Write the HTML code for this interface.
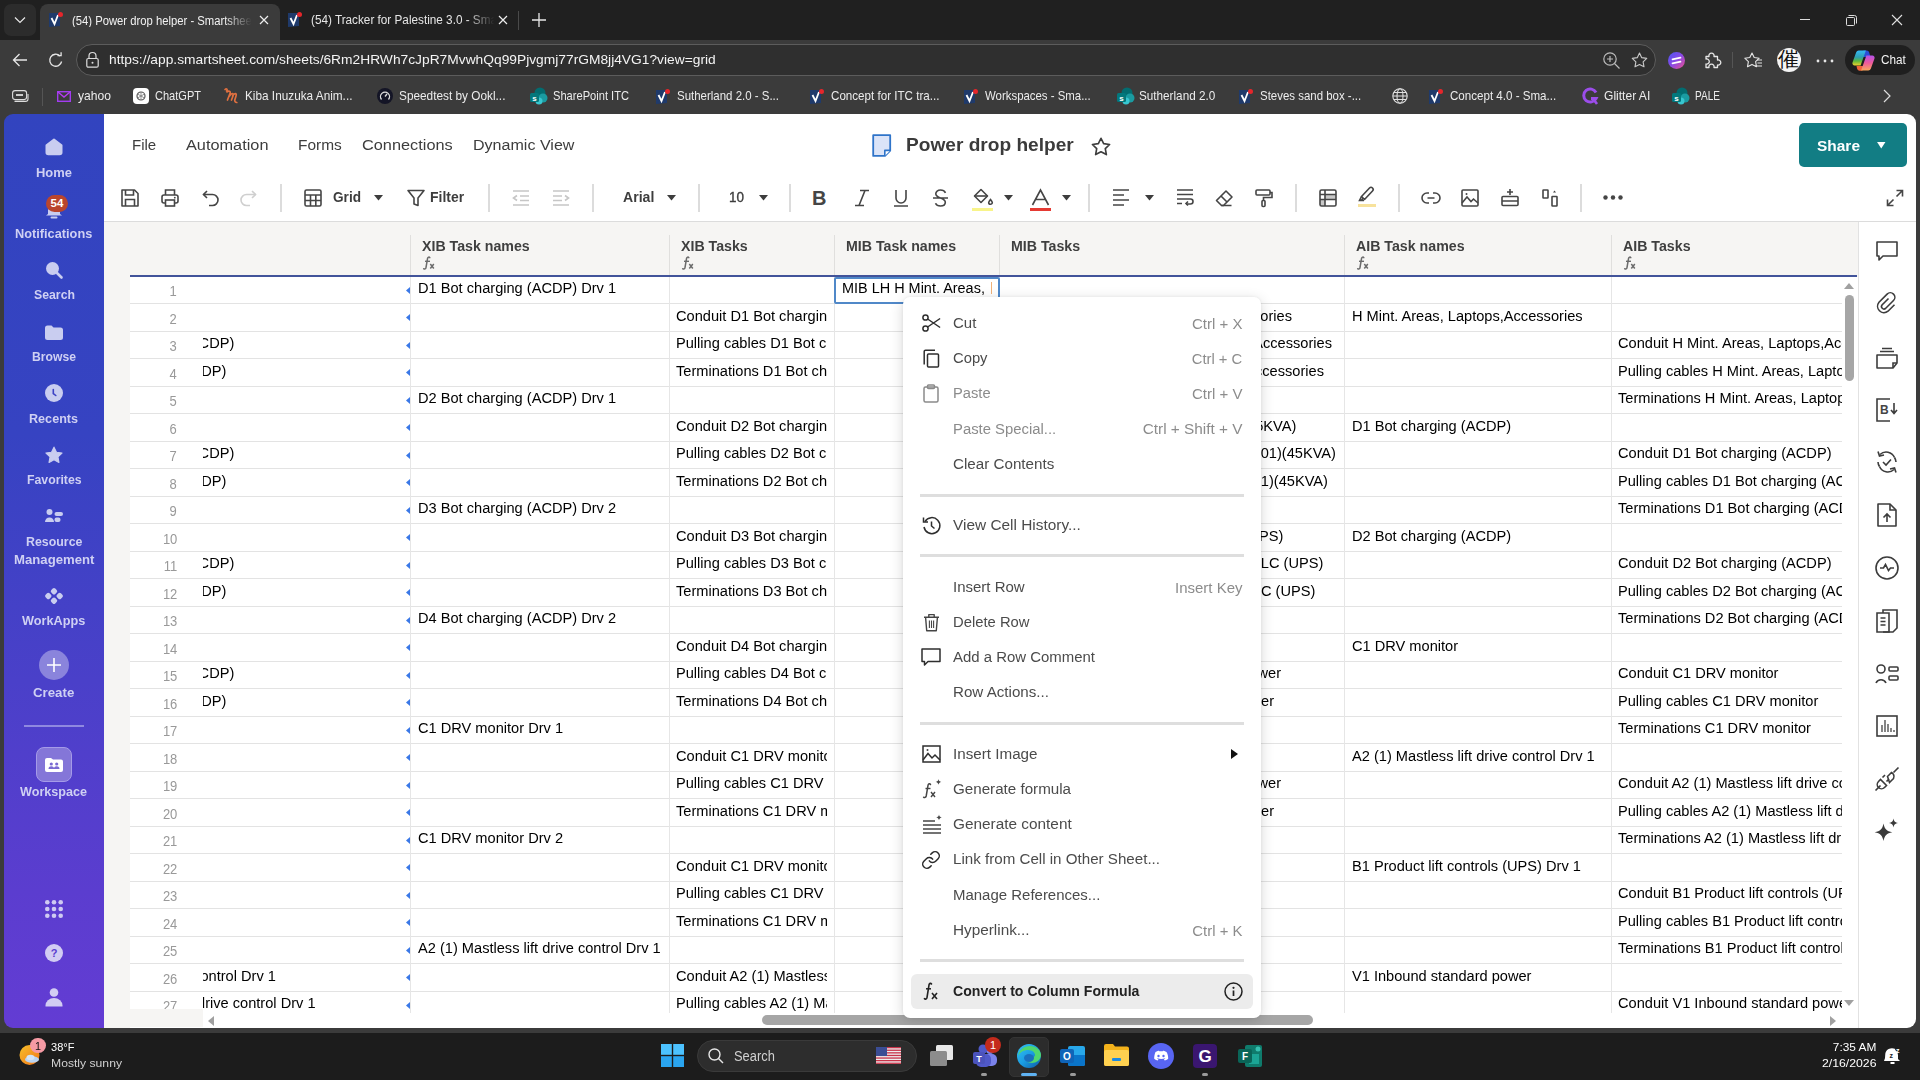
<!DOCTYPE html><html><head><meta charset="utf-8"><style>
*{margin:0;padding:0;box-sizing:border-box}
html,body{width:1920px;height:1080px;overflow:hidden;background:#202020;font-family:"Liberation Sans",sans-serif}
.a{position:absolute}
.t{position:absolute;white-space:nowrap;line-height:1}
svg{position:absolute;overflow:visible}
</style></head><body><div class="a" style="left:0;top:0;width:1920px;height:40px;background:#202020"></div><div class="a" style="left:4px;top:4px;width:32px;height:32px;background:#2c2c2c;border-radius:7px"></div><svg style="left:14px;top:16px" width="12" height="8" viewBox="0 0 12 8"><path d="M1 1.5l5 5 5-5" stroke="#e8e8e8" stroke-width="1.2" fill="none"/></svg><div class="a" style="left:40px;top:4px;width:240px;height:40px;background:#3b3b3b;border-radius:8px 8px 0 0"></div><svg style="left:49px;top:12px" width="14" height="15" viewBox="0 0 14 15"><path d="M0 1h11v13l-11 1z" fill="#1f3a6b"/><path d="M2.5 6l3 6 3.5-9" stroke="#fff" stroke-width="1.8" fill="none"/><circle cx="11.5" cy="2.5" r="2.5" fill="#e5262b"/></svg><div class="t" style="left:72px;top:14.59px;font-size:12.3px;font-weight:400;color:#f2f2f2;transform:scaleX(0.9164);transform-origin:0 0;width:196px;overflow:hidden;-webkit-mask-image:linear-gradient(90deg,#000 85%,transparent 100%)">(54) Power drop helper - Smartsheet</div><svg style="left:259px;top:15px" width="10" height="10" viewBox="0 0 10 10"><path d="M1 1l8 8M9 1l-8 8" stroke="#eee" stroke-width="1.2"/></svg><svg style="left:288px;top:12px" width="14" height="15" viewBox="0 0 14 15"><path d="M0 1h11v13l-11 1z" fill="#1f3a6b"/><path d="M2.5 6l3 6 3.5-9" stroke="#fff" stroke-width="1.8" fill="none"/><circle cx="11.5" cy="2.5" r="2.5" fill="#e5262b"/></svg><div class="t" style="left:311px;top:14.39px;font-size:12.3px;font-weight:400;color:#e6e6e6;transform:scaleX(0.9550);transform-origin:0 0;width:192px;overflow:hidden;-webkit-mask-image:linear-gradient(90deg,#000 85%,transparent 100%)">(54) Tracker for Palestine 3.0 - Smartsheet</div><svg style="left:498px;top:15px" width="10" height="10" viewBox="0 0 10 10"><path d="M1 1l8 8M9 1l-8 8" stroke="#eee" stroke-width="1.2"/></svg><div class="a" style="left:518px;top:11px;width:1px;height:19px;background:#4a4a4a"></div><svg style="left:532px;top:13px" width="14" height="14" viewBox="0 0 14 14"><path d="M7 0v14M0 7h14" stroke="#e8e8e8" stroke-width="1.3"/></svg><div class="a" style="left:1800px;top:19px;width:10px;height:1px;background:#ddd"></div><svg style="left:1846px;top:15px" width="11" height="11" viewBox="0 0 11 11"><rect x="0.5" y="2.5" width="8" height="8" rx="1" stroke="#ddd" fill="none"/><path d="M2.5 0.5h6a2 2 0 0 1 2 2v6" stroke="#ddd" fill="none"/></svg><svg style="left:1892px;top:15px" width="10" height="10" viewBox="0 0 10 10"><path d="M0 0l10 10M10 0l-10 10" stroke="#e0e0e0" stroke-width="1.1"/></svg><div class="a" style="left:0;top:40px;width:1920px;height:993px;background:#3b3b3b"></div><svg style="left:12px;top:53px" width="16" height="14" viewBox="0 0 16 14"><path d="M15 7H1.5M7.5 1L1.5 7l6 6" stroke="#e6e6e6" stroke-width="1.3" fill="none"/></svg><svg style="left:48px;top:52px" width="16" height="16" viewBox="0 0 16 16"><path d="M13.6 9.5A6 6 0 1 1 12 4" stroke="#e6e6e6" stroke-width="1.3" fill="none"/><path d="M9.5 3.6h3.6V0.2" stroke="#e6e6e6" stroke-width="1.3" fill="none"/></svg><div class="a" style="left:76px;top:44px;width:1580px;height:32px;background:#2f2f2f;border:1px solid #5c5c5c;border-radius:16px"></div><svg style="left:86px;top:52px" width="13" height="16" viewBox="0 0 13 16"><rect x="0.8" y="6.5" width="11.4" height="8.7" rx="1.5" stroke="#ddd" stroke-width="1.2" fill="none"/><path d="M3 6.5V4a3.5 3.5 0 0 1 7 0v2.5" stroke="#ddd" stroke-width="1.2" fill="none"/><circle cx="6.5" cy="10.8" r="1" fill="#ddd"/></svg><div class="t" style="left:108.7px;top:53.19px;font-size:13.6px;font-weight:400;color:#f4f4f4;transform:scaleX(1.0137);transform-origin:0 0;">https://app.smartsheet.com/sheets/6Rm2HRWh7cJpR7MvwhQq99Pjvgmj77rGM8jj4VG1?view=grid</div><svg style="left:1603px;top:52px" width="17" height="17" viewBox="0 0 17 17"><circle cx="7" cy="7" r="6.2" stroke="#bbb" stroke-width="1.2" fill="none"/><path d="M11.5 11.5l5 5M7 4v6M4 7h6" stroke="#bbb" stroke-width="1.2"/></svg><svg style="left:1631px;top:52px" width="17" height="16" viewBox="0 0 24 23"><path d="M12 1.5l3.2 6.6 7.2 1-5.2 5 1.3 7.2L12 17.9l-6.5 3.4 1.3-7.2-5.2-5 7.2-1z" stroke="#c8c8c8" stroke-width="1.6" fill="none" stroke-linejoin="round"/></svg><svg style="left:1668px;top:52px" width="17" height="17" viewBox="0 0 17 17"><defs><linearGradient id="gx" x1="0" y1="0" x2="1" y2="1"><stop offset="0" stop-color="#4a57f2"/><stop offset="0.5" stop-color="#8a48e6"/><stop offset="1" stop-color="#f0528a"/></linearGradient></defs><circle cx="8.5" cy="8.5" r="8.5" fill="url(#gx)"/><path d="M4.5 7.3l8-1.6M4.5 11.3l8-1.6" stroke="#fff" stroke-width="1.7" stroke-linecap="round"/></svg><svg style="left:1703px;top:51px" width="18" height="18" viewBox="0 0 18 18"><path d="M3 5.5h3a2.6 2.6 0 1 1 5 0h3.5V9a2.6 2.6 0 1 1 0 5v2.5H11a2.6 2.6 0 1 0-5 0H3V13a2.6 2.6 0 1 0 0-5z" stroke="#e6e6e6" stroke-width="1.3" fill="none" stroke-linejoin="round"/></svg><div class="a" style="left:1732px;top:52px;width:1px;height:16px;background:#555"></div><svg style="left:1744px;top:52px" width="19" height="16" viewBox="0 0 19 16"><path d="M8 1l2.2 4.5 5 .7-3.6 3.5.9 5L8 12.4l-4.5 2.3.9-5L.8 6.2l5-.7z" stroke="#e6e6e6" stroke-width="1.1" fill="none" stroke-linejoin="round"/><path d="M13 8h5M13.5 11h4.5M11 14h7" stroke="#e6e6e6" stroke-width="1.1"/></svg><div class="a" style="left:1777px;top:48px;width:24px;height:24px;border-radius:50%;background:#f4f4f4;overflow:hidden"><div class="t" style="left:1px;top:1px;font-size:21px;color:#111;font-family:'Liberation Serif'">催</div></div><svg style="left:1816px;top:59px" width="18" height="4" viewBox="0 0 18 4"><circle cx="2" cy="2" r="1.4" fill="#e6e6e6"/><circle cx="9" cy="2" r="1.4" fill="#e6e6e6"/><circle cx="16" cy="2" r="1.4" fill="#e6e6e6"/></svg><div class="a" style="left:1845px;top:45px;width:70px;height:30px;background:#1f1f1f;border-radius:15px"></div><svg style="left:1852px;top:49.5px" width="23" height="21" viewBox="0 0 23 21"><defs><linearGradient id="cpa" x1="0" y1="0" x2="0" y2="1"><stop offset="0" stop-color="#35b9f6"/><stop offset="0.45" stop-color="#2f9fb0"/><stop offset="0.7" stop-color="#5cb83c"/><stop offset="1" stop-color="#f3d02c"/></linearGradient><linearGradient id="cpb" x1="0" y1="0" x2="0" y2="1"><stop offset="0" stop-color="#b552ea"/><stop offset="0.5" stop-color="#ee5a9a"/><stop offset="1" stop-color="#f8a75c"/></linearGradient></defs><path d="M11.5 0.5h3.2a2.6 2.6 0 0 1 2.5 1.9L18.5 7H10z" fill="#2b4fd8"/><path d="M4.5 16h8l-1.2 3.2a2.6 2.6 0 0 1-2.4 1.6H7.6a2.6 2.6 0 0 1-2.4-1.7z" fill="#f0643a"/><path d="M6.7 0.5h7.2L8.6 15.5H2.6A2.2 2.2 0 0 1 .5 12.6L4.2 2.3A2.6 2.6 0 0 1 6.7.5z" fill="url(#cpa)"/><path d="M16.3 20.5H9.1l5.3-15h6A2.2 2.2 0 0 1 22.5 8.4l-3.7 10.3a2.6 2.6 0 0 1-2.5 1.8z" fill="url(#cpb)"/></svg><div class="t" style="left:1880.7px;top:53.59px;font-size:12.3px;font-weight:400;color:#f4f4f4;transform:scaleX(0.9545);transform-origin:0 0;">Chat</div><svg style="left:12px;top:90px" width="17" height="12" viewBox="0 0 17 12"><rect x="0.6" y="0.6" width="14" height="9" rx="2.5" stroke="#ddd" stroke-width="1.1" fill="none"/><path d="M4 5h7" stroke="#ddd" stroke-width="1.8"/><path d="M2.5 11.4h11a2.5 2.5 0 0 0 2.5-2.5V4" stroke="#ddd" stroke-width="1.1" fill="none"/></svg><div class="a" style="left:42px;top:88px;width:1px;height:18px;background:#555"></div><svg style="left:57px;top:91px" width="14" height="11" viewBox="0 0 14 11"><rect x="0.7" y="0.7" width="12.6" height="9.6" stroke="#a23cf0" stroke-width="1.4" fill="none"/><path d="M1 1l6 5 6-5" stroke="#b43cf0" stroke-width="1.4" fill="none"/></svg><div class="t" style="left:77.5px;top:89.83px;font-size:12.6px;font-weight:400;color:#ececec;transform:scaleX(0.9612);transform-origin:0 0;">yahoo</div><div class="a" style="left:133px;top:88px;width:16px;height:16px;background:#fff;border-radius:4px"></div><svg style="left:136px;top:91px" width="10" height="10" viewBox="0 0 10 10"><circle cx="5" cy="5" r="4" stroke="#555" stroke-width="1.2" fill="none"/><path d="M5 1v8M1.5 3l7 4M1.5 7l7-4" stroke="#777" stroke-width=".8"/></svg><div class="t" style="left:154.5px;top:89.83px;font-size:12.6px;font-weight:400;color:#ececec;transform:scaleX(0.8759);transform-origin:0 0;">ChatGPT</div><svg style="left:222px;top:87px" width="18" height="18" viewBox="0 0 18 18"><path d="M3 2.5c1.5-1.5 3 0 1.5 1.5M5 5c1.5-1.5 4-1 3 1.5L5.5 13M7.5 9c2-3.5 4.5-3 3.5 0l-1.5 4M10.5 9c2-3.5 4.5-3 3.5 0l-1.2 4c-.3 1.2.6 2.5 2 2.5" stroke="#e07040" stroke-width="1.7" fill="none" stroke-linecap="round"/></svg><div class="t" style="left:245px;top:89.83px;font-size:12.6px;font-weight:400;color:#ececec;transform:scaleX(0.9359);transform-origin:0 0;">Kiba Inuzuka Anim...</div><svg style="left:377px;top:88px" width="16" height="16" viewBox="0 0 16 16"><circle cx="8" cy="8" r="8" fill="#141526"/><path d="M4.5 11.5a4.5 4.5 0 1 1 7 0" stroke="#ddd" stroke-width="1.3" fill="none"/><path d="M8 8.5l2-2.5" stroke="#ddd" stroke-width="1.3"/></svg><div class="t" style="left:398.75px;top:89.83px;font-size:12.6px;font-weight:400;color:#ececec;transform:scaleX(0.9386);transform-origin:0 0;">Speedtest by Ookl...</div><svg style="left:530px;top:87px" width="18" height="18" viewBox="0 0 18 18"><circle cx="10" cy="6" r="5.5" fill="#036c70"/><circle cx="13" cy="11" r="4.5" fill="#1a9ba1"/><circle cx="9" cy="14" r="3.5" fill="#37c6d0"/><rect x="0" y="6" width="9" height="9" rx="1.5" fill="#03787c"/><text x="4.5" y="13.5" font-size="8" font-weight="700" fill="#fff" text-anchor="middle" font-family="Liberation Sans">s</text></svg><div class="t" style="left:553px;top:89.83px;font-size:12.6px;font-weight:400;color:#ececec;transform:scaleX(0.8823);transform-origin:0 0;">SharePoint ITC</div><svg style="left:656px;top:89px" width="14" height="15" viewBox="0 0 14 15"><path d="M0 1h11v13l-11 1z" fill="#1f3a6b"/><path d="M2.5 6l3 6 3.5-9" stroke="#fff" stroke-width="1.8" fill="none"/><circle cx="11.5" cy="2.5" r="2.5" fill="#e5262b"/></svg><div class="t" style="left:677px;top:89.83px;font-size:12.6px;font-weight:400;color:#ececec;transform:scaleX(0.9102);transform-origin:0 0;">Sutherland 2.0 - S...</div><svg style="left:810px;top:89px" width="14" height="15" viewBox="0 0 14 15"><path d="M0 1h11v13l-11 1z" fill="#1f3a6b"/><path d="M2.5 6l3 6 3.5-9" stroke="#fff" stroke-width="1.8" fill="none"/><circle cx="11.5" cy="2.5" r="2.5" fill="#e5262b"/></svg><div class="t" style="left:830.75px;top:89.83px;font-size:12.6px;font-weight:400;color:#ececec;transform:scaleX(0.9223);transform-origin:0 0;">Concept for ITC tra...</div><svg style="left:964px;top:89px" width="14" height="15" viewBox="0 0 14 15"><path d="M0 1h11v13l-11 1z" fill="#1f3a6b"/><path d="M2.5 6l3 6 3.5-9" stroke="#fff" stroke-width="1.8" fill="none"/><circle cx="11.5" cy="2.5" r="2.5" fill="#e5262b"/></svg><div class="t" style="left:985px;top:89.83px;font-size:12.6px;font-weight:400;color:#ececec;transform:scaleX(0.9062);transform-origin:0 0;">Workspaces - Sma...</div><svg style="left:1117px;top:87px" width="18" height="18" viewBox="0 0 18 18"><circle cx="10" cy="6" r="5.5" fill="#036c70"/><circle cx="13" cy="11" r="4.5" fill="#1a9ba1"/><circle cx="9" cy="14" r="3.5" fill="#37c6d0"/><rect x="0" y="6" width="9" height="9" rx="1.5" fill="#03787c"/><text x="4.5" y="13.5" font-size="8" font-weight="700" fill="#fff" text-anchor="middle" font-family="Liberation Sans">s</text></svg><div class="t" style="left:1138.75px;top:89.83px;font-size:12.6px;font-weight:400;color:#ececec;transform:scaleX(0.9303);transform-origin:0 0;">Sutherland 2.0</div><svg style="left:1239px;top:89px" width="14" height="15" viewBox="0 0 14 15"><path d="M0 1h11v13l-11 1z" fill="#1f3a6b"/><path d="M2.5 6l3 6 3.5-9" stroke="#fff" stroke-width="1.8" fill="none"/><circle cx="11.5" cy="2.5" r="2.5" fill="#e5262b"/></svg><div class="t" style="left:1260px;top:89.83px;font-size:12.6px;font-weight:400;color:#ececec;transform:scaleX(0.9092);transform-origin:0 0;">Steves sand box -...</div><svg style="left:1392px;top:88px" width="16" height="16" viewBox="0 0 16 16"><circle cx="8" cy="8" r="7.2" stroke="#e0e0e0" stroke-width="1.1" fill="none"/><ellipse cx="8" cy="8" rx="3" ry="7.2" stroke="#e0e0e0" stroke-width="1.1" fill="none"/><path d="M1 8h14M2 4.5h12M2 11.5h12" stroke="#e0e0e0" stroke-width="1"/></svg><svg style="left:1429px;top:89px" width="14" height="15" viewBox="0 0 14 15"><path d="M0 1h11v13l-11 1z" fill="#1f3a6b"/><path d="M2.5 6l3 6 3.5-9" stroke="#fff" stroke-width="1.8" fill="none"/><circle cx="11.5" cy="2.5" r="2.5" fill="#e5262b"/></svg><div class="t" style="left:1450px;top:89.83px;font-size:12.6px;font-weight:400;color:#ececec;transform:scaleX(0.9195);transform-origin:0 0;">Concept 4.0 - Sma...</div><svg style="left:1582px;top:87px" width="17" height="18" viewBox="0 0 17 18"><path d="M14 5.5A6.5 6.5 0 1 0 14 11.5H9" stroke="#9b4dea" stroke-width="3" fill="none"/><path d="M12 13l3 4" stroke="#9b4dea" stroke-width="2.6"/></svg><div class="t" style="left:1603.75px;top:89.83px;font-size:12.6px;font-weight:400;color:#ececec;transform:scaleX(0.9573);transform-origin:0 0;">Glitter AI</div><svg style="left:1672px;top:87px" width="18" height="18" viewBox="0 0 18 18"><circle cx="10" cy="6" r="5.5" fill="#036c70"/><circle cx="13" cy="11" r="4.5" fill="#1a9ba1"/><circle cx="9" cy="14" r="3.5" fill="#37c6d0"/><rect x="0" y="6" width="9" height="9" rx="1.5" fill="#03787c"/><text x="4.5" y="13.5" font-size="8" font-weight="700" fill="#fff" text-anchor="middle" font-family="Liberation Sans">s</text></svg><div class="t" style="left:1695px;top:89.83px;font-size:12.6px;font-weight:400;color:#ececec;transform:scaleX(0.7991);transform-origin:0 0;">PALE</div><svg style="left:1883px;top:89px" width="8" height="14" viewBox="0 0 8 14"><path d="M1 1l6 6-6 6" stroke="#ddd" stroke-width="1.2" fill="none"/></svg><div class="a" style="left:4px;top:114px;width:100px;height:914px;border-radius:9px 0 0 9px;background:linear-gradient(180deg,#3244bf 0%,#3643c2 35%,#4a40c9 62%,#5b3dcf 85%,#633cd3 100%)"></div><svg style="left:45px;top:138px" width="18" height="17" viewBox="0 0 18 17"><path d="M9 1.5L16.5 7.3v7.2a1.8 1.8 0 0 1-1.8 1.8H3.3a1.8 1.8 0 0 1-1.8-1.8V7.3z" fill="#c9cdf0" stroke="#c9cdf0" stroke-width="2" stroke-linejoin="round"/></svg><div class="t" style="left:36.0px;top:166.57px;font-size:12.2px;font-weight:700;color:#cfd0f3;transform:scaleX(1.0621);transform-origin:0 0;">Home</div><svg style="left:45px;top:203px" width="18" height="16" viewBox="0 0 18 16"><path d="M3 11V7a6 6 0 0 1 12 0v4l2 1.5H1z" fill="#c9cdf0"/><path d="M6.5 14.5h5" stroke="#c9cdf0" stroke-width="2" stroke-linecap="round"/></svg><div class="a" style="left:46px;top:195px;width:22px;height:17px;border-radius:9px;background:#b9452e"></div><div class="t" style="left:46px;width:22px;text-align:center;top:198px;font-size:11.5px;font-weight:700;color:#fff">54</div><div class="t" style="left:15.299999999999997px;top:227.67px;font-size:12.2px;font-weight:700;color:#cfd0f3;transform:scaleX(1.0476);transform-origin:0 0;">Notifications</div><svg style="left:45px;top:261px" width="18" height="18" viewBox="0 0 18 18"><circle cx="7.5" cy="7.5" r="6.5" fill="#c9cdf0"/><path d="M12 12l4.5 4.5" stroke="#c9cdf0" stroke-width="2.6" stroke-linecap="round"/></svg><div class="t" style="left:33.5px;top:289.27px;font-size:12.2px;font-weight:700;color:#cfd0f3;transform:scaleX(1.0075);transform-origin:0 0;">Search</div><svg style="left:45px;top:325px" width="18" height="15" viewBox="0 0 18 15"><path d="M0 3a2.5 2.5 0 0 1 2.5-2.5h4l2 2h7A2.5 2.5 0 0 1 18 5v7.5A2.5 2.5 0 0 1 15.5 15h-13A2.5 2.5 0 0 1 0 12.5z" fill="#c9cdf0"/></svg><div class="t" style="left:32.0px;top:350.67px;font-size:12.2px;font-weight:700;color:#cfd0f3;transform:scaleX(0.9984);transform-origin:0 0;">Browse</div><svg style="left:45px;top:384px" width="18" height="18" viewBox="0 0 18 18"><circle cx="9" cy="9" r="9" fill="#c9cdf0"/><path d="M8.3 5.5v4l2.5 2" stroke="#3d42c4" stroke-width="1.6" fill="none" stroke-linecap="round"/></svg><div class="t" style="left:29.45px;top:412.67px;font-size:12.2px;font-weight:700;color:#cfd0f3;transform:scaleX(1.0344);transform-origin:0 0;">Recents</div><svg style="left:45px;top:446px" width="18" height="18" viewBox="0 0 24 23"><path d="M12 1l3.3 6.8 7.4 1-5.4 5.2 1.3 7.4L12 17.9l-6.6 3.5 1.3-7.4L1.3 8.8l7.4-1z" fill="#c9cdf0" stroke="#c9cdf0" stroke-width="1.5" stroke-linejoin="round"/></svg><div class="t" style="left:26.7px;top:473.67px;font-size:12.2px;font-weight:700;color:#cfd0f3;transform:scaleX(1.0065);transform-origin:0 0;">Favorites</div><svg style="left:45px;top:509px" width="18" height="14" viewBox="0 0 18 14"><circle cx="4.5" cy="3" r="3" fill="#c9cdf0"/><path d="M0 13a4.5 4.5 0 0 1 9 0z" fill="#c9cdf0"/><rect x="9.5" y="3" width="8.5" height="4" rx="2" fill="#c9cdf0"/><rect x="9.5" y="8.5" width="6" height="4.5" rx="2" fill="#c9cdf0"/></svg><div class="t" style="left:25.75px;top:535.67px;font-size:12.2px;font-weight:700;color:#cfd0f3;transform:scaleX(1.0161);transform-origin:0 0;">Resource</div><div class="t" style="left:13.75px;top:553.67px;font-size:12.2px;font-weight:700;color:#cfd0f3;transform:scaleX(1.0795);transform-origin:0 0;">Management</div><svg style="left:45px;top:588px" width="18" height="16" viewBox="0 0 18 16"><g fill="#c9cdf0"><rect x="-2.8" y="-2.8" width="5.6" height="5.6" rx="1.8" transform="translate(9 3.3) rotate(45)"/><rect x="-2.8" y="-2.8" width="5.6" height="5.6" rx="1.8" transform="translate(3.3 8) rotate(45)"/><rect x="-2.8" y="-2.8" width="5.6" height="5.6" rx="1.8" transform="translate(14.7 8) rotate(45)"/><rect x="-2.8" y="-2.8" width="5.6" height="5.6" rx="1.8" transform="translate(9 12.7) rotate(45)"/></g></svg><div class="t" style="left:22.3px;top:614.67px;font-size:12.2px;font-weight:700;color:#cfd0f3;transform:scaleX(1.0431);transform-origin:0 0;">WorkApps</div><div class="a" style="left:39px;top:650px;width:30px;height:30px;border-radius:50%;background:#8a84dc"></div><svg style="left:46px;top:657px" width="16" height="16" viewBox="0 0 16 16"><path d="M8 1v14M1 8h14" stroke="#fff" stroke-width="1.6"/></svg><div class="t" style="left:33.35px;top:686.67px;font-size:12.2px;font-weight:700;color:#cfd0f3;transform:scaleX(1.0875);transform-origin:0 0;">Create</div><div class="a" style="left:24px;top:725px;width:60px;height:2px;background:#8f89e0"></div><div class="a" style="left:36px;top:747px;width:36px;height:35px;border-radius:8px;background:#8476d8;border:1.5px solid #a59be8"></div><svg style="left:45px;top:758px" width="18" height="14" viewBox="0 0 18 14"><path d="M0 2a2 2 0 0 1 2-2h4l2 1.5h8a2 2 0 0 1 2 2V12a2 2 0 0 1-2 2H2a2 2 0 0 1-2-2z" fill="#fff"/><circle cx="6.3" cy="6" r="1.6" fill="#7a6ad2"/><circle cx="11.7" cy="6" r="1.6" fill="#7a6ad2"/><path d="M3.5 11a2.8 2.8 0 0 1 5.6 0zM8.9 11a2.8 2.8 0 0 1 5.6 0z" fill="#7a6ad2"/></svg><div class="t" style="left:20.4px;top:786.37px;font-size:12.2px;font-weight:700;color:#cfd0f3;transform:scaleX(1.0359);transform-origin:0 0;">Workspace</div><svg style="left:45px;top:900px" width="18" height="18" viewBox="0 0 18 18"><circle cx="2.3" cy="2.3" r="2.3" fill="#cfcaf2"/><circle cx="2.3" cy="9.0" r="2.3" fill="#cfcaf2"/><circle cx="2.3" cy="15.7" r="2.3" fill="#cfcaf2"/><circle cx="9.0" cy="2.3" r="2.3" fill="#cfcaf2"/><circle cx="9.0" cy="9.0" r="2.3" fill="#cfcaf2"/><circle cx="9.0" cy="15.7" r="2.3" fill="#cfcaf2"/><circle cx="15.7" cy="2.3" r="2.3" fill="#cfcaf2"/><circle cx="15.7" cy="9.0" r="2.3" fill="#cfcaf2"/><circle cx="15.7" cy="15.7" r="2.3" fill="#cfcaf2"/></svg><svg style="left:45px;top:944px" width="18" height="18" viewBox="0 0 18 18"><circle cx="9" cy="9" r="9" fill="#d2ccf3"/><text x="9" y="12.8" text-anchor="middle" font-size="11" font-weight="700" fill="#5a3ecf" font-family="Liberation Sans">?</text></svg><svg style="left:45px;top:988px" width="18" height="19" viewBox="0 0 18 19"><circle cx="9" cy="4.5" r="4.3" fill="#d2ccf3"/><path d="M0.5 17.5a8.5 7.5 0 0 1 17 0v1H0.5z" fill="#d2ccf3"/></svg><div class="a" style="left:104px;top:114px;width:1812px;height:914px;background:#fff;border-radius:0 9px 9px 0;overflow:hidden"></div><div class="t" style="left:132px;top:136.96px;font-size:15.4px;font-weight:400;color:#3d3d3d;transform:scaleX(0.9772);transform-origin:0 0;">File</div><div class="t" style="left:185.75px;top:136.96px;font-size:15.4px;font-weight:400;color:#3d3d3d;transform:scaleX(1.0590);transform-origin:0 0;">Automation</div><div class="t" style="left:297.5px;top:136.96px;font-size:15.4px;font-weight:400;color:#3d3d3d;transform:scaleX(1.0027);transform-origin:0 0;">Forms</div><div class="t" style="left:361.75px;top:136.96px;font-size:15.4px;font-weight:400;color:#3d3d3d;transform:scaleX(1.0600);transform-origin:0 0;">Connections</div><div class="t" style="left:473px;top:136.96px;font-size:15.4px;font-weight:400;color:#3d3d3d;transform:scaleX(1.0433);transform-origin:0 0;">Dynamic View</div><svg style="left:872px;top:134px" width="20" height="23" viewBox="0 0 20 23"><path d="M1.2 1.2h17v15.5l-5.2 5.2H1.2z" fill="#dbe4f8" stroke="#2f74c9" stroke-width="1.8" stroke-linejoin="round"/><path d="M18.2 16.4h-5.4v5.5" fill="#fff" stroke="#2f74c9" stroke-width="1.6" stroke-linejoin="round"/></svg><div class="t" style="left:905.8px;top:136.09px;font-size:18.8px;font-weight:700;color:#3b3b3b;transform:scaleX(1.0173);transform-origin:0 0;">Power drop helper</div><svg style="left:1091px;top:137px" width="20" height="19" viewBox="0 0 24 23"><path d="M12 1.5l3.2 6.6 7.2 1-5.2 5 1.3 7.2L12 17.9l-6.5 3.4 1.3-7.2-5.2-5 7.2-1z" stroke="#3d3d3d" stroke-width="2" fill="none" stroke-linejoin="round"/></svg><div class="a" style="left:1799px;top:123px;width:108px;height:44px;background:#127d84;border-radius:5px"></div><div class="t" style="left:1816.6px;top:137.50px;font-size:15px;font-weight:700;color:#fff;transform:scaleX(1.0314);transform-origin:0 0;">Share</div><svg style="left:1877px;top:142px" width="8.5" height="6.5" viewBox="0 0 9 7"><path d="M0 0h9L4.5 7z" fill="#fff"/></svg><svg style="left:121px;top:189px" width="18" height="18" viewBox="0 0 18 18"><path d="M1 1h12.5L17 4.5V17H1z" stroke="#454545" stroke-width="1.6" fill="none" stroke-linejoin="round"/><path d="M4.5 1v5h8V1M4.5 17v-6.5h9V17" stroke="#454545" stroke-width="1.6" fill="none"/></svg><svg style="left:161px;top:189px" width="18" height="18" viewBox="0 0 18 18"><path d="M4.5 6V1h9v5" stroke="#454545" stroke-width="1.6" fill="none"/><rect x="1" y="6" width="16" height="8" rx="2" stroke="#454545" stroke-width="1.6" fill="none"/><rect x="4.5" y="11" width="9" height="6" fill="#fff" stroke="#454545" stroke-width="1.6"/><circle cx="13.8" cy="8.7" r="0.9" fill="#454545"/></svg><svg style="left:202px;top:189px" width="17" height="18" viewBox="0 0 17 18"><path d="M1.5 5.5h9a5.5 5.5 0 0 1 0 11H7" stroke="#454545" stroke-width="1.6" fill="none"/><path d="M5 2L1.5 5.5 5 9" stroke="#454545" stroke-width="1.6" fill="none"/></svg><svg style="left:240px;top:189px" width="17" height="18" viewBox="0 0 17 18"><path d="M15.5 5.5h-9a5.5 5.5 0 0 0 0 11H10" stroke="#cfcfcf" stroke-width="1.6" fill="none"/><path d="M12 2l3.5 3.5L12 9" stroke="#cfcfcf" stroke-width="1.6" fill="none"/></svg><div class="a" style="left:280px;top:184px;width:2px;height:28px;background:#dcdcdc"></div><svg style="left:304px;top:189px" width="18" height="18" viewBox="0 0 18 18"><rect x="1" y="1" width="16" height="16" rx="1.5" stroke="#454545" stroke-width="1.6" fill="none"/><path d="M1 6h16M1 11.5h16M6.5 6v11M11.8 6v11" stroke="#454545" stroke-width="1.6" fill="none"/></svg><div class="t" style="left:333.3px;top:191.02px;font-size:13.8px;font-weight:700;color:#3d3d3d;transform:scaleX(0.9870);transform-origin:0 0;">Grid</div><svg style="left:374px;top:194.5px" width="9" height="6" viewBox="0 0 9 6"><path d="M0 0h9L4.5 5.5z" fill="#3d3d3d"/></svg><svg style="left:407px;top:189px" width="18" height="18" viewBox="0 0 18 18"><path d="M1 1.5h16L11 9v7.5l-4-1.5V9z" stroke="#454545" stroke-width="1.6" fill="none" stroke-linejoin="round"/></svg><div class="t" style="left:429.6px;top:191.02px;font-size:13.8px;font-weight:700;color:#3d3d3d;transform:scaleX(1.0107);transform-origin:0 0;">Filter</div><div class="a" style="left:488px;top:184px;width:2px;height:28px;background:#dcdcdc"></div><svg style="left:512px;top:190px" width="18" height="16" viewBox="0 0 18 16"><path d="M1 1h16M8 6h9M8 10.5h9M1 15h16M5 5.5L1.5 8 5 10.5" stroke="#c6c6c6" stroke-width="1.6" fill="none"/></svg><svg style="left:552px;top:190px" width="18" height="16" viewBox="0 0 18 16"><path d="M1 1h16M1 6h9M1 10.5h9M1 15h16M13 5.5L16.5 8 13 10.5" stroke="#c6c6c6" stroke-width="1.6" fill="none"/></svg><div class="a" style="left:592px;top:184px;width:2px;height:28px;background:#dcdcdc"></div><div class="t" style="left:622.7px;top:191.02px;font-size:13.8px;font-weight:700;color:#3d3d3d;transform:scaleX(1.0202);transform-origin:0 0;">Arial</div><svg style="left:667px;top:194.5px" width="9" height="6" viewBox="0 0 9 6"><path d="M0 0h9L4.5 5.5z" fill="#3d3d3d"/></svg><div class="a" style="left:698px;top:184px;width:2px;height:28px;background:#dcdcdc"></div><div class="t" style="left:729px;top:191.02px;font-size:13.8px;font-weight:400;color:#3d3d3d;transform:scaleX(0.9772);transform-origin:0 0;-webkit-text-stroke:0.35px #3d3d3d">10</div><svg style="left:759px;top:194.5px" width="9" height="6" viewBox="0 0 9 6"><path d="M0 0h9L4.5 5.5z" fill="#3d3d3d"/></svg><div class="a" style="left:789px;top:184px;width:2px;height:28px;background:#dcdcdc"></div><div class="t" style="left:812px;top:188px;font-size:20px;font-weight:700;color:#454545">B</div><svg style="left:853px;top:189px" width="18" height="18" viewBox="0 0 18 18"><path d="M7 1.5h9M2 16.5h9M12 1.5L6 16.5" stroke="#454545" stroke-width="1.6" fill="none"/></svg><svg style="left:893px;top:189px" width="16" height="18" viewBox="0 0 16 18"><path d="M3 1v8a5 5 0 0 0 10 0V1M1 17h14" stroke="#454545" stroke-width="1.6" fill="none"/></svg><svg style="left:932px;top:189px" width="17" height="18" viewBox="0 0 17 18"><path d="M13.5 3.8C12.6 2 11 1 8.5 1 5.8 1 3.8 2.5 3.8 4.8c0 2.2 2 3.2 4.7 4.2M1 9h15M8.5 9c2.8 1 4.8 2 4.8 4.2 0 2.3-2 3.8-4.8 3.8-2.5 0-4.2-1-5-2.8" stroke="#454545" stroke-width="1.6" fill="none"/></svg><svg style="left:972px;top:188px" width="22" height="17" viewBox="0 0 22 17"><path d="M9 1.5L15.5 8 9 14.5 2.5 8z" stroke="#454545" stroke-width="1.6" fill="none" stroke-linejoin="round"/><path d="M2.5 8h13" stroke="#454545" stroke-width="1.6" fill="none"/><path d="M18.5 11.5c1.2 1.5 1.8 2.3 1.8 3a1.8 1.8 0 0 1-3.6 0c0-.7.6-1.5 1.8-3z" stroke="#454545" stroke-width="1.6" fill="none"/></svg><div class="a" style="left:972px;top:208px;width:21px;height:3px;background:#f8f48a"></div><svg style="left:1004px;top:194.5px" width="9" height="6" viewBox="0 0 9 6"><path d="M0 0h9L4.5 5.5z" fill="#3d3d3d"/></svg><svg style="left:1031px;top:189px" width="19" height="16" viewBox="0 0 19 16"><path d="M1.5 16L9.5 1l8 15M4.5 10.5h10" stroke="#454545" stroke-width="1.6" fill="none"/></svg><div class="a" style="left:1030px;top:208px;width:21px;height:3px;background:#e53a33"></div><svg style="left:1062px;top:194.5px" width="9" height="6" viewBox="0 0 9 6"><path d="M0 0h9L4.5 5.5z" fill="#3d3d3d"/></svg><div class="a" style="left:1088px;top:184px;width:2px;height:28px;background:#dcdcdc"></div><svg style="left:1112px;top:189px" width="18" height="17" viewBox="0 0 18 17"><path d="M1 1h16M1 6h11M1 11h16M1 16h11" stroke="#454545" stroke-width="1.6" fill="none"/></svg><svg style="left:1145px;top:194.5px" width="9" height="6" viewBox="0 0 9 6"><path d="M0 0h9L4.5 5.5z" fill="#3d3d3d"/></svg><svg style="left:1176px;top:189px" width="18" height="18" viewBox="0 0 18 18"><path d="M1 1h16M1 5.5h16M1 10h13.5a2.5 2.5 0 0 1 0 5H10M1 14.5h5" stroke="#454545" stroke-width="1.6" fill="none"/><path d="M12 12.5l-2 2 2 2" stroke="#454545" stroke-width="1.6" fill="none"/></svg><svg style="left:1215px;top:189px" width="18" height="18" viewBox="0 0 18 18"><path d="M1.5 11.5L11 2l6 6-8.5 8.5H6.5z" stroke="#454545" stroke-width="1.6" fill="none" stroke-linejoin="round"/><path d="M6 7l6 6M6.5 16.5h10" stroke="#454545" stroke-width="1.6" fill="none"/></svg><svg style="left:1255px;top:189px" width="18" height="18" viewBox="0 0 18 18"><rect x="1" y="1" width="14" height="5" rx="1" stroke="#454545" stroke-width="1.6" fill="none"/><path d="M15 3.5h2v5H8.5v3" stroke="#454545" stroke-width="1.6" fill="none"/><rect x="7" y="11.5" width="3" height="6" rx="1" stroke="#454545" stroke-width="1.6" fill="none"/></svg><div class="a" style="left:1295px;top:184px;width:2px;height:28px;background:#dcdcdc"></div><svg style="left:1319px;top:189px" width="18" height="18" viewBox="0 0 18 18"><rect x="6" y="5.5" width="11" height="5" fill="#c8c8c8"/><rect x="1" y="10.5" width="5" height="6" fill="#c8c8c8"/><rect x="1" y="1" width="16" height="16" rx="1.5" stroke="#454545" stroke-width="1.6" fill="none"/><path d="M1 5.5h16M1 10.5h16M6 1v16" stroke="#454545" stroke-width="1.6" fill="none"/></svg><svg style="left:1358px;top:187px" width="18" height="18" viewBox="0 0 18 18"><path d="M6.5 12.5l8-8.5a2 2 0 0 0-3-3l-8 8.5z" stroke="#454545" stroke-width="1.6" fill="none" stroke-linejoin="round"/><path d="M3.5 9.5l-2 4h4.5M5.5 11L3 13.5" stroke="#454545" stroke-width="1.6" fill="none"/></svg><div class="a" style="left:1358px;top:204px;width:18px;height:3px;background:#f7e29c"></div><div class="a" style="left:1398px;top:184px;width:2px;height:28px;background:#dcdcdc"></div><svg style="left:1422px;top:191px" width="18" height="14" viewBox="0 0 18 14"><path d="M7 2H5a5 5 0 0 0 0 10h2M11 2h2a5 5 0 0 1 0 10h-2M5.5 7h7" stroke="#454545" stroke-width="1.6" fill="none"/></svg><svg style="left:1461px;top:189px" width="18" height="18" viewBox="0 0 18 18"><rect x="1" y="1" width="16" height="16" rx="1" stroke="#454545" stroke-width="1.6" fill="none"/><path d="M1 14l5-6 4 4.5 2.5-2.5L17 14" stroke="#454545" stroke-width="1.6" fill="none"/><circle cx="5.5" cy="5" r="1" fill="#454545"/></svg><svg style="left:1501px;top:188px" width="18" height="19" viewBox="0 0 18 19"><rect x="1" y="8.5" width="16" height="9" rx="1" stroke="#454545" stroke-width="1.6" fill="none"/><path d="M1 13h16M9 1v6M6 4h6" stroke="#454545" stroke-width="1.6" fill="none"/></svg><svg style="left:1542px;top:189px" width="16" height="18" viewBox="0 0 16 18"><rect x="1" y="1" width="5" height="8" rx="0.5" stroke="#454545" stroke-width="1.6" fill="none"/><rect x="10" y="7.5" width="5" height="9.5" rx="0.5" stroke="#454545" stroke-width="1.6" fill="none"/><path d="M11 3.5l1.5-2 1.5 2" fill="#454545"/></svg><div class="a" style="left:1580px;top:184px;width:2px;height:28px;background:#dcdcdc"></div><svg style="left:1603px;top:195px" width="20" height="5" viewBox="0 0 20 5"><circle cx="2.5" cy="2.5" r="2.2" fill="#454545"/><circle cx="10" cy="2.5" r="2.2" fill="#454545"/><circle cx="17.5" cy="2.5" r="2.2" fill="#454545"/></svg><svg style="left:1886px;top:189px" width="18" height="18" viewBox="0 0 18 18"><path d="M10.5 1.5h6v6M16.5 1.5l-6 6M7.5 16.5h-6v-6M1.5 16.5l6-6" stroke="#454545" stroke-width="1.6" fill="none"/></svg><div class="a" style="left:104px;top:221px;width:1812px;height:1px;background:#dcdcdc"></div><div class="a" style="left:104px;top:222px;width:1754px;height:806px;background:#f6f5f3"></div><div class="a" style="left:410px;top:235px;width:1px;height:40px;background:#e0dfdd"></div><div class="a" style="left:669px;top:235px;width:1px;height:40px;background:#e0dfdd"></div><div class="a" style="left:834px;top:235px;width:1px;height:40px;background:#e0dfdd"></div><div class="a" style="left:999px;top:235px;width:1px;height:40px;background:#e0dfdd"></div><div class="a" style="left:1344px;top:235px;width:1px;height:40px;background:#e0dfdd"></div><div class="a" style="left:1611px;top:235px;width:1px;height:40px;background:#e0dfdd"></div><div class="t" style="left:421.8px;top:238.93px;font-size:14.5px;font-weight:700;color:#3f3f3f;transform:scaleX(0.9781);transform-origin:0 0;">XIB Task names</div><svg style="left:423px;top:256px" width="12" height="14" viewBox="0 0 12 14"><path d="M6.8 1.6C6.2 0.8 5 1 4.6 2.2L3 11.5c-.3 1.4-1.5 2-2.3 1.3" stroke="#6b6b6b" stroke-width="1.5" fill="none" stroke-linecap="round"/><path d="M2 5.3h5" stroke="#6b6b6b" stroke-width="1.4"/><path d="M7.3 8l3.5 4.5M10.8 8L7.3 12.5" stroke="#6b6b6b" stroke-width="1.5"/></svg><div class="t" style="left:680.8px;top:238.93px;font-size:14.5px;font-weight:700;color:#3f3f3f;transform:scaleX(0.9781);transform-origin:0 0;">XIB Tasks</div><svg style="left:682px;top:256px" width="12" height="14" viewBox="0 0 12 14"><path d="M6.8 1.6C6.2 0.8 5 1 4.6 2.2L3 11.5c-.3 1.4-1.5 2-2.3 1.3" stroke="#6b6b6b" stroke-width="1.5" fill="none" stroke-linecap="round"/><path d="M2 5.3h5" stroke="#6b6b6b" stroke-width="1.4"/><path d="M7.3 8l3.5 4.5M10.8 8L7.3 12.5" stroke="#6b6b6b" stroke-width="1.5"/></svg><div class="t" style="left:845.8px;top:238.93px;font-size:14.5px;font-weight:700;color:#3f3f3f;transform:scaleX(0.9781);transform-origin:0 0;">MIB Task names</div><div class="t" style="left:1010.8px;top:238.93px;font-size:14.5px;font-weight:700;color:#3f3f3f;transform:scaleX(0.9781);transform-origin:0 0;">MIB Tasks</div><div class="t" style="left:1355.8px;top:238.93px;font-size:14.5px;font-weight:700;color:#3f3f3f;transform:scaleX(0.9781);transform-origin:0 0;">AIB Task names</div><svg style="left:1357px;top:256px" width="12" height="14" viewBox="0 0 12 14"><path d="M6.8 1.6C6.2 0.8 5 1 4.6 2.2L3 11.5c-.3 1.4-1.5 2-2.3 1.3" stroke="#6b6b6b" stroke-width="1.5" fill="none" stroke-linecap="round"/><path d="M2 5.3h5" stroke="#6b6b6b" stroke-width="1.4"/><path d="M7.3 8l3.5 4.5M10.8 8L7.3 12.5" stroke="#6b6b6b" stroke-width="1.5"/></svg><div class="t" style="left:1622.8px;top:238.93px;font-size:14.5px;font-weight:700;color:#3f3f3f;transform:scaleX(0.9781);transform-origin:0 0;">AIB Tasks</div><svg style="left:1624px;top:256px" width="12" height="14" viewBox="0 0 12 14"><path d="M6.8 1.6C6.2 0.8 5 1 4.6 2.2L3 11.5c-.3 1.4-1.5 2-2.3 1.3" stroke="#6b6b6b" stroke-width="1.5" fill="none" stroke-linecap="round"/><path d="M2 5.3h5" stroke="#6b6b6b" stroke-width="1.4"/><path d="M7.3 8l3.5 4.5M10.8 8L7.3 12.5" stroke="#6b6b6b" stroke-width="1.5"/></svg><div class="a" style="left:130px;top:277px;width:1712px;height:736px;background:#fff;overflow:hidden"><div class="a" style="left:0;top:26.0px;width:1712px;height:1px;background:#e3e3e3"></div><div class="a" style="left:0;top:53.5px;width:1712px;height:1px;background:#e3e3e3"></div><div class="a" style="left:0;top:81.0px;width:1712px;height:1px;background:#e3e3e3"></div><div class="a" style="left:0;top:108.5px;width:1712px;height:1px;background:#e3e3e3"></div><div class="a" style="left:0;top:136.0px;width:1712px;height:1px;background:#e3e3e3"></div><div class="a" style="left:0;top:163.5px;width:1712px;height:1px;background:#e3e3e3"></div><div class="a" style="left:0;top:191.0px;width:1712px;height:1px;background:#e3e3e3"></div><div class="a" style="left:0;top:218.5px;width:1712px;height:1px;background:#e3e3e3"></div><div class="a" style="left:0;top:246.0px;width:1712px;height:1px;background:#e3e3e3"></div><div class="a" style="left:0;top:273.5px;width:1712px;height:1px;background:#e3e3e3"></div><div class="a" style="left:0;top:301.0px;width:1712px;height:1px;background:#e3e3e3"></div><div class="a" style="left:0;top:328.5px;width:1712px;height:1px;background:#e3e3e3"></div><div class="a" style="left:0;top:356.0px;width:1712px;height:1px;background:#e3e3e3"></div><div class="a" style="left:0;top:383.5px;width:1712px;height:1px;background:#e3e3e3"></div><div class="a" style="left:0;top:411.0px;width:1712px;height:1px;background:#e3e3e3"></div><div class="a" style="left:0;top:438.5px;width:1712px;height:1px;background:#e3e3e3"></div><div class="a" style="left:0;top:466.0px;width:1712px;height:1px;background:#e3e3e3"></div><div class="a" style="left:0;top:493.5px;width:1712px;height:1px;background:#e3e3e3"></div><div class="a" style="left:0;top:521.0px;width:1712px;height:1px;background:#e3e3e3"></div><div class="a" style="left:0;top:548.5px;width:1712px;height:1px;background:#e3e3e3"></div><div class="a" style="left:0;top:576.0px;width:1712px;height:1px;background:#e3e3e3"></div><div class="a" style="left:0;top:603.5px;width:1712px;height:1px;background:#e3e3e3"></div><div class="a" style="left:0;top:631.0px;width:1712px;height:1px;background:#e3e3e3"></div><div class="a" style="left:0;top:658.5px;width:1712px;height:1px;background:#e3e3e3"></div><div class="a" style="left:0;top:686.0px;width:1712px;height:1px;background:#e3e3e3"></div><div class="a" style="left:0;top:713.5px;width:1712px;height:1px;background:#e3e3e3"></div><div class="a" style="left:0;top:741.0px;width:1712px;height:1px;background:#e3e3e3"></div><div class="a" style="left:280px;top:0;width:1px;height:736px;background:#e6e6e6"></div><div class="a" style="left:539px;top:0;width:1px;height:736px;background:#e6e6e6"></div><div class="a" style="left:704px;top:0;width:1px;height:736px;background:#e6e6e6"></div><div class="a" style="left:869px;top:0;width:1px;height:736px;background:#e6e6e6"></div><div class="a" style="left:1214px;top:0;width:1px;height:736px;background:#e6e6e6"></div><div class="a" style="left:1481px;top:0;width:1px;height:736px;background:#e6e6e6"></div><div class="t" style="left:39.32px;top:8.42px;font-size:13.8px;font-weight:400;color:#999;transform:scaleX(0.9420);transform-origin:7.68px 0;">1</div><svg style="left:276px;top:9.5px" width="4" height="7" viewBox="0 0 4 7"><path d="M4 0v7L0 3.5z" fill="#3a78e7"/></svg><div class="t" style="left:287.9px;top:3.16px;font-size:15.4px;font-weight:400;color:#000;transform:scaleX(0.9491);transform-origin:0 0;">D1 Bot charging (ACDP) Drv 1</div><div class="t" style="left:39.32px;top:35.92px;font-size:13.8px;font-weight:400;color:#999;transform:scaleX(0.9420);transform-origin:7.68px 0;">2</div><svg style="left:276px;top:37.0px" width="4" height="7" viewBox="0 0 4 7"><path d="M4 0v7L0 3.5z" fill="#3a78e7"/></svg><div class="a" style="left:546.3px;top:0;width:150.3px;height:736px;overflow:hidden"><div class="t" style="left:0px;top:30.66px;font-size:15.4px;font-weight:400;color:#000;transform:scaleX(0.9491);transform-origin:0 0;">Conduit D1 Bot charging (ACDP)</div></div><div class="a" style="left:869px;top:0;width:295.0px;height:736px;overflow:hidden"><div class="t" style="left:150.90px;top:30.66px;font-size:15.4px;font-weight:400;color:#000;transform:scaleX(0.9491);transform-origin:142.10px 0;">Laptops,Accessories</div></div><div class="t" style="left:1222px;top:30.66px;font-size:15.4px;font-weight:400;color:#000;transform:scaleX(0.9491);transform-origin:0 0;">H Mint. Areas, Laptops,Accessories</div><div class="t" style="left:39.32px;top:63.42px;font-size:13.8px;font-weight:400;color:#999;transform:scaleX(0.9420);transform-origin:7.68px 0;">3</div><svg style="left:276px;top:64.5px" width="4" height="7" viewBox="0 0 4 7"><path d="M4 0v7L0 3.5z" fill="#3a78e7"/></svg><div class="a" style="left:73px;top:0;width:200px;height:736px;overflow:hidden"><div class="t" style="left:-85.20px;top:58.16px;font-size:15.4px;font-weight:400;color:#000;transform:scaleX(0.9491);transform-origin:116.40px 0;">charging (ACDP)</div></div><div class="a" style="left:546.3px;top:0;width:150.3px;height:736px;overflow:hidden"><div class="t" style="left:0px;top:58.16px;font-size:15.4px;font-weight:400;color:#000;transform:scaleX(0.9491);transform-origin:0 0;">Pulling cables D1 Bot charging (ACDP)</div></div><div class="a" style="left:869px;top:0;width:335.0px;height:736px;overflow:hidden"><div class="t" style="left:190.90px;top:58.16px;font-size:15.4px;font-weight:400;color:#000;transform:scaleX(0.9491);transform-origin:142.10px 0;">Laptops,Accessories</div></div><div class="a" style="left:1488px;top:0;width:224.0px;height:736px;overflow:hidden"><div class="t" style="left:0px;top:58.16px;font-size:15.4px;font-weight:400;color:#000;transform:scaleX(0.9491);transform-origin:0 0;">Conduit H Mint. Areas, Laptops,Accessories</div></div><div class="t" style="left:39.32px;top:90.92px;font-size:13.8px;font-weight:400;color:#999;transform:scaleX(0.9420);transform-origin:7.68px 0;">4</div><svg style="left:276px;top:92.0px" width="4" height="7" viewBox="0 0 4 7"><path d="M4 0v7L0 3.5z" fill="#3a78e7"/></svg><div class="a" style="left:73px;top:0;width:200px;height:736px;overflow:hidden"><div class="t" style="left:-93.40px;top:85.66px;font-size:15.4px;font-weight:400;color:#000;transform:scaleX(0.9491);transform-origin:116.40px 0;">charging (ACDP)</div></div><div class="a" style="left:546.3px;top:0;width:150.3px;height:736px;overflow:hidden"><div class="t" style="left:0px;top:85.66px;font-size:15.4px;font-weight:400;color:#000;transform:scaleX(0.9491);transform-origin:0 0;">Terminations D1 Bot charging (ACDP)</div></div><div class="a" style="left:869px;top:0;width:327.0px;height:736px;overflow:hidden"><div class="t" style="left:182.90px;top:85.66px;font-size:15.4px;font-weight:400;color:#000;transform:scaleX(0.9491);transform-origin:142.10px 0;">Laptops,Accessories</div></div><div class="a" style="left:1488px;top:0;width:224.0px;height:736px;overflow:hidden"><div class="t" style="left:0px;top:85.66px;font-size:15.4px;font-weight:400;color:#000;transform:scaleX(0.9491);transform-origin:0 0;">Pulling cables H Mint. Areas, Laptops,Accessories</div></div><div class="t" style="left:39.32px;top:118.42px;font-size:13.8px;font-weight:400;color:#999;transform:scaleX(0.9420);transform-origin:7.68px 0;">5</div><svg style="left:276px;top:119.5px" width="4" height="7" viewBox="0 0 4 7"><path d="M4 0v7L0 3.5z" fill="#3a78e7"/></svg><div class="t" style="left:287.9px;top:113.16px;font-size:15.4px;font-weight:400;color:#000;transform:scaleX(0.9491);transform-origin:0 0;">D2 Bot charging (ACDP) Drv 1</div><div class="a" style="left:1488px;top:0;width:224.0px;height:736px;overflow:hidden"><div class="t" style="left:0px;top:113.16px;font-size:15.4px;font-weight:400;color:#000;transform:scaleX(0.9491);transform-origin:0 0;">Terminations H Mint. Areas, Laptops,Accessories</div></div><div class="t" style="left:39.32px;top:145.92px;font-size:13.8px;font-weight:400;color:#999;transform:scaleX(0.9420);transform-origin:7.68px 0;">6</div><svg style="left:276px;top:147.0px" width="4" height="7" viewBox="0 0 4 7"><path d="M4 0v7L0 3.5z" fill="#3a78e7"/></svg><div class="a" style="left:546.3px;top:0;width:150.3px;height:736px;overflow:hidden"><div class="t" style="left:0px;top:140.66px;font-size:15.4px;font-weight:400;color:#000;transform:scaleX(0.9491);transform-origin:0 0;">Conduit D2 Bot charging (ACDP)</div></div><div class="a" style="left:869px;top:0;width:299.0px;height:736px;overflow:hidden"><div class="t" style="left:188.59px;top:140.66px;font-size:15.4px;font-weight:400;color:#000;transform:scaleX(0.9491);transform-origin:108.41px 0;">monitor(45KVA)</div></div><div class="t" style="left:1222px;top:140.66px;font-size:15.4px;font-weight:400;color:#000;transform:scaleX(0.9491);transform-origin:0 0;">D1 Bot charging (ACDP)</div><div class="t" style="left:39.32px;top:173.42px;font-size:13.8px;font-weight:400;color:#999;transform:scaleX(0.9420);transform-origin:7.68px 0;">7</div><svg style="left:276px;top:174.5px" width="4" height="7" viewBox="0 0 4 7"><path d="M4 0v7L0 3.5z" fill="#3a78e7"/></svg><div class="a" style="left:73px;top:0;width:200px;height:736px;overflow:hidden"><div class="t" style="left:-85.20px;top:168.16px;font-size:15.4px;font-weight:400;color:#000;transform:scaleX(0.9491);transform-origin:116.40px 0;">charging (ACDP)</div></div><div class="a" style="left:546.3px;top:0;width:150.3px;height:736px;overflow:hidden"><div class="t" style="left:0px;top:168.16px;font-size:15.4px;font-weight:400;color:#000;transform:scaleX(0.9491);transform-origin:0 0;">Pulling cables D2 Bot charging (ACDP)</div></div><div class="a" style="left:869px;top:0;width:339.0px;height:736px;overflow:hidden"><div class="t" style="left:226.03px;top:168.16px;font-size:15.4px;font-weight:400;color:#000;transform:scaleX(0.9491);transform-origin:110.97px 0;">(RP-01)(45KVA)</div></div><div class="a" style="left:1488px;top:0;width:224.0px;height:736px;overflow:hidden"><div class="t" style="left:0px;top:168.16px;font-size:15.4px;font-weight:400;color:#000;transform:scaleX(0.9491);transform-origin:0 0;">Conduit D1 Bot charging (ACDP)</div></div><div class="t" style="left:39.32px;top:200.92px;font-size:13.8px;font-weight:400;color:#999;transform:scaleX(0.9420);transform-origin:7.68px 0;">8</div><svg style="left:276px;top:202.0px" width="4" height="7" viewBox="0 0 4 7"><path d="M4 0v7L0 3.5z" fill="#3a78e7"/></svg><div class="a" style="left:73px;top:0;width:200px;height:736px;overflow:hidden"><div class="t" style="left:-93.40px;top:195.66px;font-size:15.4px;font-weight:400;color:#000;transform:scaleX(0.9491);transform-origin:116.40px 0;">charging (ACDP)</div></div><div class="a" style="left:546.3px;top:0;width:150.3px;height:736px;overflow:hidden"><div class="t" style="left:0px;top:195.66px;font-size:15.4px;font-weight:400;color:#000;transform:scaleX(0.9491);transform-origin:0 0;">Terminations D2 Bot charging (ACDP)</div></div><div class="a" style="left:869px;top:0;width:331.0px;height:736px;overflow:hidden"><div class="t" style="left:218.03px;top:195.66px;font-size:15.4px;font-weight:400;color:#000;transform:scaleX(0.9491);transform-origin:110.97px 0;">(RP-01)(45KVA)</div></div><div class="a" style="left:1488px;top:0;width:224.0px;height:736px;overflow:hidden"><div class="t" style="left:0px;top:195.66px;font-size:15.4px;font-weight:400;color:#000;transform:scaleX(0.9491);transform-origin:0 0;">Pulling cables D1 Bot charging (ACDP)</div></div><div class="t" style="left:39.32px;top:228.42px;font-size:13.8px;font-weight:400;color:#999;transform:scaleX(0.9420);transform-origin:7.68px 0;">9</div><svg style="left:276px;top:229.5px" width="4" height="7" viewBox="0 0 4 7"><path d="M4 0v7L0 3.5z" fill="#3a78e7"/></svg><div class="t" style="left:287.9px;top:223.16px;font-size:15.4px;font-weight:400;color:#000;transform:scaleX(0.9491);transform-origin:0 0;">D3 Bot charging (ACDP) Drv 2</div><div class="a" style="left:1488px;top:0;width:224.0px;height:736px;overflow:hidden"><div class="t" style="left:0px;top:223.16px;font-size:15.4px;font-weight:400;color:#000;transform:scaleX(0.9491);transform-origin:0 0;">Terminations D1 Bot charging (ACDP)</div></div><div class="t" style="left:31.65px;top:255.92px;font-size:13.8px;font-weight:400;color:#999;transform:scaleX(0.9420);transform-origin:15.35px 0;">10</div><svg style="left:276px;top:257.0px" width="4" height="7" viewBox="0 0 4 7"><path d="M4 0v7L0 3.5z" fill="#3a78e7"/></svg><div class="a" style="left:546.3px;top:0;width:150.3px;height:736px;overflow:hidden"><div class="t" style="left:0px;top:250.66px;font-size:15.4px;font-weight:400;color:#000;transform:scaleX(0.9491);transform-origin:0 0;">Conduit D3 Bot charging (ACDP)</div></div><div class="a" style="left:869px;top:0;width:286.0px;height:736px;overflow:hidden"><div class="t" style="left:149.64px;top:250.66px;font-size:15.4px;font-weight:400;color:#000;transform:scaleX(0.9491);transform-origin:134.36px 0;">controls PLC (UPS)</div></div><div class="t" style="left:1222px;top:250.66px;font-size:15.4px;font-weight:400;color:#000;transform:scaleX(0.9491);transform-origin:0 0;">D2 Bot charging (ACDP)</div><div class="t" style="left:32.67px;top:283.42px;font-size:13.8px;font-weight:400;color:#999;transform:scaleX(0.9420);transform-origin:14.33px 0;">11</div><svg style="left:276px;top:284.5px" width="4" height="7" viewBox="0 0 4 7"><path d="M4 0v7L0 3.5z" fill="#3a78e7"/></svg><div class="a" style="left:73px;top:0;width:200px;height:736px;overflow:hidden"><div class="t" style="left:-85.20px;top:278.16px;font-size:15.4px;font-weight:400;color:#000;transform:scaleX(0.9491);transform-origin:116.40px 0;">charging (ACDP)</div></div><div class="a" style="left:546.3px;top:0;width:150.3px;height:736px;overflow:hidden"><div class="t" style="left:0px;top:278.16px;font-size:15.4px;font-weight:400;color:#000;transform:scaleX(0.9491);transform-origin:0 0;">Pulling cables D3 Bot charging (ACDP)</div></div><div class="a" style="left:869px;top:0;width:326.0px;height:736px;overflow:hidden"><div class="t" style="left:189.64px;top:278.16px;font-size:15.4px;font-weight:400;color:#000;transform:scaleX(0.9491);transform-origin:134.36px 0;">controls PLC (UPS)</div></div><div class="a" style="left:1488px;top:0;width:224.0px;height:736px;overflow:hidden"><div class="t" style="left:0px;top:278.16px;font-size:15.4px;font-weight:400;color:#000;transform:scaleX(0.9491);transform-origin:0 0;">Conduit D2 Bot charging (ACDP)</div></div><div class="t" style="left:31.65px;top:310.92px;font-size:13.8px;font-weight:400;color:#999;transform:scaleX(0.9420);transform-origin:15.35px 0;">12</div><svg style="left:276px;top:312.0px" width="4" height="7" viewBox="0 0 4 7"><path d="M4 0v7L0 3.5z" fill="#3a78e7"/></svg><div class="a" style="left:73px;top:0;width:200px;height:736px;overflow:hidden"><div class="t" style="left:-93.40px;top:305.66px;font-size:15.4px;font-weight:400;color:#000;transform:scaleX(0.9491);transform-origin:116.40px 0;">charging (ACDP)</div></div><div class="a" style="left:546.3px;top:0;width:150.3px;height:736px;overflow:hidden"><div class="t" style="left:0px;top:305.66px;font-size:15.4px;font-weight:400;color:#000;transform:scaleX(0.9491);transform-origin:0 0;">Terminations D3 Bot charging (ACDP)</div></div><div class="a" style="left:869px;top:0;width:318.0px;height:736px;overflow:hidden"><div class="t" style="left:181.64px;top:305.66px;font-size:15.4px;font-weight:400;color:#000;transform:scaleX(0.9491);transform-origin:134.36px 0;">controls PLC (UPS)</div></div><div class="a" style="left:1488px;top:0;width:224.0px;height:736px;overflow:hidden"><div class="t" style="left:0px;top:305.66px;font-size:15.4px;font-weight:400;color:#000;transform:scaleX(0.9491);transform-origin:0 0;">Pulling cables D2 Bot charging (ACDP)</div></div><div class="t" style="left:31.65px;top:338.42px;font-size:13.8px;font-weight:400;color:#999;transform:scaleX(0.9420);transform-origin:15.35px 0;">13</div><svg style="left:276px;top:339.5px" width="4" height="7" viewBox="0 0 4 7"><path d="M4 0v7L0 3.5z" fill="#3a78e7"/></svg><div class="t" style="left:287.9px;top:333.16px;font-size:15.4px;font-weight:400;color:#000;transform:scaleX(0.9491);transform-origin:0 0;">D4 Bot charging (ACDP) Drv 2</div><div class="a" style="left:1488px;top:0;width:224.0px;height:736px;overflow:hidden"><div class="t" style="left:0px;top:333.16px;font-size:15.4px;font-weight:400;color:#000;transform:scaleX(0.9491);transform-origin:0 0;">Terminations D2 Bot charging (ACDP)</div></div><div class="t" style="left:31.65px;top:365.92px;font-size:13.8px;font-weight:400;color:#999;transform:scaleX(0.9420);transform-origin:15.35px 0;">14</div><svg style="left:276px;top:367.0px" width="4" height="7" viewBox="0 0 4 7"><path d="M4 0v7L0 3.5z" fill="#3a78e7"/></svg><div class="a" style="left:546.3px;top:0;width:150.3px;height:736px;overflow:hidden"><div class="t" style="left:0px;top:360.66px;font-size:15.4px;font-weight:400;color:#000;transform:scaleX(0.9491);transform-origin:0 0;">Conduit D4 Bot charging (ACDP)</div></div><div class="t" style="left:1222px;top:360.66px;font-size:15.4px;font-weight:400;color:#000;transform:scaleX(0.9491);transform-origin:0 0;">C1 DRV monitor</div><div class="t" style="left:31.65px;top:393.42px;font-size:13.8px;font-weight:400;color:#999;transform:scaleX(0.9420);transform-origin:15.35px 0;">15</div><svg style="left:276px;top:394.5px" width="4" height="7" viewBox="0 0 4 7"><path d="M4 0v7L0 3.5z" fill="#3a78e7"/></svg><div class="a" style="left:73px;top:0;width:200px;height:736px;overflow:hidden"><div class="t" style="left:-85.20px;top:388.16px;font-size:15.4px;font-weight:400;color:#000;transform:scaleX(0.9491);transform-origin:116.40px 0;">charging (ACDP)</div></div><div class="a" style="left:546.3px;top:0;width:150.3px;height:736px;overflow:hidden"><div class="t" style="left:0px;top:388.16px;font-size:15.4px;font-weight:400;color:#000;transform:scaleX(0.9491);transform-origin:0 0;">Pulling cables D4 Bot charging (ACDP)</div></div><div class="a" style="left:869px;top:0;width:284.0px;height:736px;overflow:hidden"><div class="t" style="left:175.84px;top:388.16px;font-size:15.4px;font-weight:400;color:#000;transform:scaleX(0.9491);transform-origin:106.16px 0;">standard power</div></div><div class="a" style="left:1488px;top:0;width:224.0px;height:736px;overflow:hidden"><div class="t" style="left:0px;top:388.16px;font-size:15.4px;font-weight:400;color:#000;transform:scaleX(0.9491);transform-origin:0 0;">Conduit C1 DRV monitor</div></div><div class="t" style="left:31.65px;top:420.92px;font-size:13.8px;font-weight:400;color:#999;transform:scaleX(0.9420);transform-origin:15.35px 0;">16</div><svg style="left:276px;top:422.0px" width="4" height="7" viewBox="0 0 4 7"><path d="M4 0v7L0 3.5z" fill="#3a78e7"/></svg><div class="a" style="left:73px;top:0;width:200px;height:736px;overflow:hidden"><div class="t" style="left:-93.40px;top:415.66px;font-size:15.4px;font-weight:400;color:#000;transform:scaleX(0.9491);transform-origin:116.40px 0;">charging (ACDP)</div></div><div class="a" style="left:546.3px;top:0;width:150.3px;height:736px;overflow:hidden"><div class="t" style="left:0px;top:415.66px;font-size:15.4px;font-weight:400;color:#000;transform:scaleX(0.9491);transform-origin:0 0;">Terminations D4 Bot charging (ACDP)</div></div><div class="a" style="left:869px;top:0;width:277.0px;height:736px;overflow:hidden"><div class="t" style="left:168.84px;top:415.66px;font-size:15.4px;font-weight:400;color:#000;transform:scaleX(0.9491);transform-origin:106.16px 0;">standard power</div></div><div class="a" style="left:1488px;top:0;width:224.0px;height:736px;overflow:hidden"><div class="t" style="left:0px;top:415.66px;font-size:15.4px;font-weight:400;color:#000;transform:scaleX(0.9491);transform-origin:0 0;">Pulling cables C1 DRV monitor</div></div><div class="t" style="left:31.65px;top:448.42px;font-size:13.8px;font-weight:400;color:#999;transform:scaleX(0.9420);transform-origin:15.35px 0;">17</div><svg style="left:276px;top:449.5px" width="4" height="7" viewBox="0 0 4 7"><path d="M4 0v7L0 3.5z" fill="#3a78e7"/></svg><div class="t" style="left:287.9px;top:443.16px;font-size:15.4px;font-weight:400;color:#000;transform:scaleX(0.9491);transform-origin:0 0;">C1 DRV monitor Drv 1</div><div class="a" style="left:1488px;top:0;width:224.0px;height:736px;overflow:hidden"><div class="t" style="left:0px;top:443.16px;font-size:15.4px;font-weight:400;color:#000;transform:scaleX(0.9491);transform-origin:0 0;">Terminations C1 DRV monitor</div></div><div class="t" style="left:31.65px;top:475.92px;font-size:13.8px;font-weight:400;color:#999;transform:scaleX(0.9420);transform-origin:15.35px 0;">18</div><svg style="left:276px;top:477.0px" width="4" height="7" viewBox="0 0 4 7"><path d="M4 0v7L0 3.5z" fill="#3a78e7"/></svg><div class="a" style="left:546.3px;top:0;width:150.3px;height:736px;overflow:hidden"><div class="t" style="left:0px;top:470.66px;font-size:15.4px;font-weight:400;color:#000;transform:scaleX(0.9491);transform-origin:0 0;">Conduit C1 DRV monitor</div></div><div class="t" style="left:1222px;top:470.66px;font-size:15.4px;font-weight:400;color:#000;transform:scaleX(0.9491);transform-origin:0 0;">A2 (1) Mastless lift drive control Drv 1</div><div class="t" style="left:31.65px;top:503.42px;font-size:13.8px;font-weight:400;color:#999;transform:scaleX(0.9420);transform-origin:15.35px 0;">19</div><svg style="left:276px;top:504.5px" width="4" height="7" viewBox="0 0 4 7"><path d="M4 0v7L0 3.5z" fill="#3a78e7"/></svg><div class="a" style="left:546.3px;top:0;width:150.3px;height:736px;overflow:hidden"><div class="t" style="left:0px;top:498.16px;font-size:15.4px;font-weight:400;color:#000;transform:scaleX(0.9491);transform-origin:0 0;">Pulling cables C1 DRV monitor</div></div><div class="a" style="left:869px;top:0;width:284.0px;height:736px;overflow:hidden"><div class="t" style="left:175.84px;top:498.16px;font-size:15.4px;font-weight:400;color:#000;transform:scaleX(0.9491);transform-origin:106.16px 0;">standard power</div></div><div class="a" style="left:1488px;top:0;width:224.0px;height:736px;overflow:hidden"><div class="t" style="left:0px;top:498.16px;font-size:15.4px;font-weight:400;color:#000;transform:scaleX(0.9491);transform-origin:0 0;">Conduit A2 (1) Mastless lift drive control Drv 1</div></div><div class="t" style="left:31.65px;top:530.92px;font-size:13.8px;font-weight:400;color:#999;transform:scaleX(0.9420);transform-origin:15.35px 0;">20</div><svg style="left:276px;top:532.0px" width="4" height="7" viewBox="0 0 4 7"><path d="M4 0v7L0 3.5z" fill="#3a78e7"/></svg><div class="a" style="left:546.3px;top:0;width:150.3px;height:736px;overflow:hidden"><div class="t" style="left:0px;top:525.66px;font-size:15.4px;font-weight:400;color:#000;transform:scaleX(0.9491);transform-origin:0 0;">Terminations C1 DRV monitor</div></div><div class="a" style="left:869px;top:0;width:277.0px;height:736px;overflow:hidden"><div class="t" style="left:168.84px;top:525.66px;font-size:15.4px;font-weight:400;color:#000;transform:scaleX(0.9491);transform-origin:106.16px 0;">standard power</div></div><div class="a" style="left:1488px;top:0;width:224.0px;height:736px;overflow:hidden"><div class="t" style="left:0px;top:525.66px;font-size:15.4px;font-weight:400;color:#000;transform:scaleX(0.9491);transform-origin:0 0;">Pulling cables A2 (1) Mastless lift drive control Drv 1</div></div><div class="t" style="left:31.65px;top:558.42px;font-size:13.8px;font-weight:400;color:#999;transform:scaleX(0.9420);transform-origin:15.35px 0;">21</div><svg style="left:276px;top:559.5px" width="4" height="7" viewBox="0 0 4 7"><path d="M4 0v7L0 3.5z" fill="#3a78e7"/></svg><div class="t" style="left:287.9px;top:553.16px;font-size:15.4px;font-weight:400;color:#000;transform:scaleX(0.9491);transform-origin:0 0;">C1 DRV monitor Drv 2</div><div class="a" style="left:1488px;top:0;width:224.0px;height:736px;overflow:hidden"><div class="t" style="left:0px;top:553.16px;font-size:15.4px;font-weight:400;color:#000;transform:scaleX(0.9491);transform-origin:0 0;">Terminations A2 (1) Mastless lift drive control Drv 1</div></div><div class="t" style="left:31.65px;top:585.92px;font-size:13.8px;font-weight:400;color:#999;transform:scaleX(0.9420);transform-origin:15.35px 0;">22</div><svg style="left:276px;top:587.0px" width="4" height="7" viewBox="0 0 4 7"><path d="M4 0v7L0 3.5z" fill="#3a78e7"/></svg><div class="a" style="left:546.3px;top:0;width:150.3px;height:736px;overflow:hidden"><div class="t" style="left:0px;top:580.66px;font-size:15.4px;font-weight:400;color:#000;transform:scaleX(0.9491);transform-origin:0 0;">Conduit C1 DRV monitor</div></div><div class="t" style="left:1222px;top:580.66px;font-size:15.4px;font-weight:400;color:#000;transform:scaleX(0.9491);transform-origin:0 0;">B1 Product lift controls (UPS) Drv 1</div><div class="t" style="left:31.65px;top:613.42px;font-size:13.8px;font-weight:400;color:#999;transform:scaleX(0.9420);transform-origin:15.35px 0;">23</div><svg style="left:276px;top:614.5px" width="4" height="7" viewBox="0 0 4 7"><path d="M4 0v7L0 3.5z" fill="#3a78e7"/></svg><div class="a" style="left:546.3px;top:0;width:150.3px;height:736px;overflow:hidden"><div class="t" style="left:0px;top:608.16px;font-size:15.4px;font-weight:400;color:#000;transform:scaleX(0.9491);transform-origin:0 0;">Pulling cables C1 DRV monitor</div></div><div class="a" style="left:1488px;top:0;width:224.0px;height:736px;overflow:hidden"><div class="t" style="left:0px;top:608.16px;font-size:15.4px;font-weight:400;color:#000;transform:scaleX(0.9491);transform-origin:0 0;">Conduit B1 Product lift controls (UPS) Drv 1</div></div><div class="t" style="left:31.65px;top:640.92px;font-size:13.8px;font-weight:400;color:#999;transform:scaleX(0.9420);transform-origin:15.35px 0;">24</div><svg style="left:276px;top:642.0px" width="4" height="7" viewBox="0 0 4 7"><path d="M4 0v7L0 3.5z" fill="#3a78e7"/></svg><div class="a" style="left:546.3px;top:0;width:150.3px;height:736px;overflow:hidden"><div class="t" style="left:0px;top:635.66px;font-size:15.4px;font-weight:400;color:#000;transform:scaleX(0.9491);transform-origin:0 0;">Terminations C1 DRV monitor</div></div><div class="a" style="left:1488px;top:0;width:224.0px;height:736px;overflow:hidden"><div class="t" style="left:0px;top:635.66px;font-size:15.4px;font-weight:400;color:#000;transform:scaleX(0.9491);transform-origin:0 0;">Pulling cables B1 Product lift controls (UPS) Drv 1</div></div><div class="t" style="left:31.65px;top:668.42px;font-size:13.8px;font-weight:400;color:#999;transform:scaleX(0.9420);transform-origin:15.35px 0;">25</div><svg style="left:276px;top:669.5px" width="4" height="7" viewBox="0 0 4 7"><path d="M4 0v7L0 3.5z" fill="#3a78e7"/></svg><div class="t" style="left:287.9px;top:663.16px;font-size:15.4px;font-weight:400;color:#000;transform:scaleX(0.9491);transform-origin:0 0;">A2 (1) Mastless lift drive control Drv 1</div><div class="a" style="left:1488px;top:0;width:224.0px;height:736px;overflow:hidden"><div class="t" style="left:0px;top:663.16px;font-size:15.4px;font-weight:400;color:#000;transform:scaleX(0.9491);transform-origin:0 0;">Terminations B1 Product lift controls (UPS) Drv 1</div></div><div class="t" style="left:31.65px;top:695.92px;font-size:13.8px;font-weight:400;color:#999;transform:scaleX(0.9420);transform-origin:15.35px 0;">26</div><svg style="left:276px;top:697.0px" width="4" height="7" viewBox="0 0 4 7"><path d="M4 0v7L0 3.5z" fill="#3a78e7"/></svg><div class="a" style="left:73px;top:0;width:200px;height:736px;overflow:hidden"><div class="t" style="left:-52.46px;top:690.66px;font-size:15.4px;font-weight:400;color:#000;transform:scaleX(0.9491);transform-origin:124.96px 0;">drive control Drv 1</div></div><div class="a" style="left:546.3px;top:0;width:150.3px;height:736px;overflow:hidden"><div class="t" style="left:0px;top:690.66px;font-size:15.4px;font-weight:400;color:#000;transform:scaleX(0.9491);transform-origin:0 0;">Conduit A2 (1) Mastless lift drive control</div></div><div class="t" style="left:1222px;top:690.66px;font-size:15.4px;font-weight:400;color:#000;transform:scaleX(0.9491);transform-origin:0 0;">V1 Inbound standard power</div><div class="t" style="left:31.65px;top:723.42px;font-size:13.8px;font-weight:400;color:#999;transform:scaleX(0.9420);transform-origin:15.35px 0;">27</div><svg style="left:276px;top:724.5px" width="4" height="7" viewBox="0 0 4 7"><path d="M4 0v7L0 3.5z" fill="#3a78e7"/></svg><div class="a" style="left:73px;top:0;width:200px;height:736px;overflow:hidden"><div class="t" style="left:-32.03px;top:718.16px;font-size:15.4px;font-weight:400;color:#000;transform:scaleX(0.9491);transform-origin:144.63px 0;">lift drive control Drv 1</div></div><div class="a" style="left:546.3px;top:0;width:150.3px;height:736px;overflow:hidden"><div class="t" style="left:0px;top:718.16px;font-size:15.4px;font-weight:400;color:#000;transform:scaleX(0.9491);transform-origin:0 0;">Pulling cables A2 (1) Mastless lift drive control</div></div><div class="a" style="left:1488px;top:0;width:224.0px;height:736px;overflow:hidden"><div class="t" style="left:0px;top:718.16px;font-size:15.4px;font-weight:400;color:#000;transform:scaleX(0.9491);transform-origin:0 0;">Conduit V1 Inbound standard power</div></div><div class="a" style="left:704px;top:0;width:166px;height:27px;border:2px solid #5088c8;border-radius:2px;background:#fff"></div><div class="t" style="left:712px;top:3.16px;font-size:15.4px;font-weight:400;color:#000;transform:scaleX(0.9386);transform-origin:0 0;">MIB LH H Mint. Areas,</div><div class="a" style="left:861px;top:5px;width:1px;height:12px;background:#f0b27a"></div></div><div class="a" style="left:130px;top:275px;width:1727px;height:2px;background:#42549a"></div><div class="a" style="left:1842px;top:277px;width:16px;height:751px;background:#fff"></div><div class="a" style="left:130px;top:1013px;width:1728px;height:15px;background:#fff"></div><div class="a" style="left:130px;top:1009px;width:73px;height:18px;background:#f6f5f3"></div><svg style="left:1844px;top:283px" width="10" height="6" viewBox="0 0 10 6"><path d="M0 6h10L5 0z" fill="#a0a0a0"/></svg><div class="a" style="left:1845px;top:295px;width:9px;height:86px;border-radius:5px;background:#a6a6a6"></div><svg style="left:1844px;top:1000px" width="10" height="6" viewBox="0 0 10 6"><path d="M0 0h10L5 6z" fill="#a0a0a0"/></svg><svg style="left:208px;top:1016px" width="6" height="10" viewBox="0 0 6 10"><path d="M6 0v10L0 5z" fill="#a0a0a0"/></svg><div class="a" style="left:762px;top:1015px;width:551px;height:10px;border-radius:5px;background:#a6a6a6"></div><svg style="left:1830px;top:1016px" width="6" height="10" viewBox="0 0 6 10"><path d="M0 0v10L6 5z" fill="#a0a0a0"/></svg><div class="a" style="left:1858px;top:222px;width:1px;height:806px;background:#e2e2e2"></div><svg style="left:1876.0px;top:240.8px" width="22" height="20" viewBox="0 0 22 20"><path d="M1 1h20v14H7l-4 4v-4H1z" stroke="#3c3c3c" stroke-width="1.6" fill="none" stroke-linejoin="round"/></svg><svg style="left:1876.0px;top:292.8px" width="22" height="22" viewBox="0 0 22 22"><path d="M12.5 5.5L6 12a2.5 2.5 0 0 0 3.5 3.5l8-8a4.5 4.5 0 0 0-6.4-6.4L3 9.2a6.4 6.4 0 0 0 9 9L18.5 11.7" stroke="#3c3c3c" stroke-width="1.6" fill="none"/></svg><svg style="left:1876.0px;top:346.8px" width="22" height="22" viewBox="0 0 22 22"><path d="M6 1.5h10M4 4.5h14" stroke="#3c3c3c" stroke-width="1.6" fill="none"/><path d="M1 8h20v8l-4 5H1z" stroke="#3c3c3c" stroke-width="1.6" fill="none" stroke-linejoin="round"/><path d="M21 16h-4v5" stroke="#3c3c3c" stroke-width="1.6" fill="none"/></svg><svg style="left:1876.0px;top:397.8px" width="22" height="24" viewBox="0 0 22 24"><path d="M14 1H1v22h13" stroke="#3c3c3c" stroke-width="1.6" fill="none"/><text x="4" y="16" font-size="12" font-weight="700" fill="#454545" font-family="Liberation Sans">B</text><path d="M18 5v10M15 12l3 3.5 3-3.5" stroke="#3c3c3c" stroke-width="1.6" fill="none"/></svg><svg style="left:1875.0px;top:449.8px" width="24" height="24" viewBox="0 0 24 24"><path d="M19.5 7.5A9 9 0 0 0 5 4.5M4.5 16.5A9 9 0 0 0 19 19.5" stroke="#3c3c3c" stroke-width="1.6" fill="none"/><path d="M2.5 7.5A9 9 0 0 0 3 15.5M21.5 16.5A9 9 0 0 0 21 8.5" stroke="#3c3c3c" stroke-width="1.6" fill="none" opacity="0"/><path d="M3 1.5l1.5 4.5 4.5-1M21 22.5l-1.5-4.5-4.5 1" stroke="#3c3c3c" stroke-width="1.6" fill="none"/><path d="M3 12a9 9 0 0 0 1.5 4.5M21 12a9 9 0 0 0-1.5-4.5" stroke="#3c3c3c" stroke-width="1.6" fill="none"/><path d="M8 12l3 3 5-5.5" stroke="#3c3c3c" stroke-width="1.6" fill="none"/></svg><svg style="left:1877.0px;top:502.8px" width="20" height="24" viewBox="0 0 20 24"><path d="M1 1h12l6 6v16H1z" stroke="#3c3c3c" stroke-width="1.6" fill="none" stroke-linejoin="round"/><path d="M13 1v6h6M10 19v-8M6.5 14.5L10 11l3.5 3.5" stroke="#3c3c3c" stroke-width="1.6" fill="none"/></svg><svg style="left:1875.0px;top:555.8px" width="24" height="24" viewBox="0 0 24 24"><circle cx="12" cy="12" r="11" stroke="#3c3c3c" stroke-width="1.6" fill="none"/><path d="M5 12h3.5l2-3.5 3 6 2-2.5H19" stroke="#3c3c3c" stroke-width="1.6" fill="none"/></svg><svg style="left:1876.0px;top:608.8px" width="22" height="24" viewBox="0 0 22 24"><path d="M7 4V1h14v18l-4 4H7" stroke="#3c3c3c" stroke-width="1.6" fill="none"/><path d="M1 4h12v19H1z" stroke="#3c3c3c" stroke-width="1.6" fill="none"/><path d="M4.5 9h5M4.5 12.5h5M4.5 16h5" stroke="#3c3c3c" stroke-width="1.6" fill="none"/></svg><svg style="left:1875.0px;top:663.8px" width="24" height="20" viewBox="0 0 24 20"><circle cx="6" cy="5" r="4" stroke="#3c3c3c" stroke-width="1.6" fill="none"/><path d="M1 19a5.5 5.5 0 0 1 10 0" stroke="#3c3c3c" stroke-width="1.6" fill="none"/><rect x="14" y="3" width="9" height="4" rx="1" stroke="#3c3c3c" stroke-width="1.6" fill="none"/><rect x="14" y="12" width="9" height="4" rx="1" stroke="#3c3c3c" stroke-width="1.6" fill="none"/></svg><svg style="left:1876.0px;top:714.8px" width="22" height="22" viewBox="0 0 22 22"><rect x="1" y="1" width="20" height="20" stroke="#3c3c3c" stroke-width="1.6" fill="none"/><path d="M6 17V10M9 17V5M12 17V9M15 17v-4M18 17v-2" stroke="#454545" stroke-width="1.3"/></svg><svg style="left:1874.0px;top:765.8px" width="26" height="26" viewBox="0 0 26 26"><path d="M1.5 24.5l5-5M24.5 1.5l-5 5" stroke="#3c3c3c" stroke-width="1.6" fill="none"/><path d="M4.5 15.5l2-2 6 6-2 2a4.2 4.2 0 0 1-6-6z" stroke="#3c3c3c" stroke-width="1.6" fill="none"/><path d="M8.5 11.5l2.5-2.5M12.5 15.5l2.5-2.5" stroke="#3c3c3c" stroke-width="1.6" fill="none"/><path d="M13.5 10.5l2-2 2-2a4.2 4.2 0 0 1 2 2 4.2 4.2 0 0 1 0 4l-2 2-2 2z" stroke="#3c3c3c" stroke-width="1.6" fill="none"/></svg><svg style="left:1874.0px;top:817.8px" width="26" height="26" viewBox="0 0 26 26"><path d="M9.5 5.5c1.2 5.8 3 7.6 8.8 8.8-5.8 1.2-7.6 3-8.8 8.8-1.2-5.8-3-7.6-8.8-8.8 5.8-1.2 7.6-3 8.8-8.8z" fill="#3a3a3a"/><path d="M19.5 0.5c.6 3 1.5 3.9 4.5 4.5-3 .6-3.9 1.5-4.5 4.5-.6-3-1.5-3.9-4.5-4.5 3-.6 3.9-1.5 4.5-4.5z" fill="#3a3a3a"/></svg><div class="a" style="left:903px;top:297px;width:358px;height:721px;background:#fff;border-radius:7px;box-shadow:0 3px 14px rgba(0,0,0,0.16),0 0 3px rgba(0,0,0,0.06)"></div><div class="a" style="left:911px;top:974px;width:342px;height:35px;background:#ececec;border-radius:6px"></div><svg style="left:921.5px;top:314.0px" width="19" height="18" viewBox="0 0 19 18"><circle cx="3.5" cy="3.5" r="2.6" stroke="#2e2e2e" stroke-width="1.5" fill="none"/><circle cx="3.5" cy="14.5" r="2.6" stroke="#2e2e2e" stroke-width="1.5" fill="none"/><path d="M5.6 5l12.5 8.5M5.6 13L18.1 4.5" stroke="#2e2e2e" stroke-width="1.5" fill="none"/></svg><div class="t" style="left:952.6px;top:315.38px;font-size:15.5px;font-weight:400;color:#4b4b4b;transform:scaleX(0.9660);transform-origin:0 0;">Cut</div><div class="t" style="left:1192.07px;top:315.80px;font-size:15px;font-weight:400;color:#8c8c8c;transform:scaleX(1.0014);transform-origin:50.43px 0;">Ctrl + X</div><svg style="left:922.5px;top:348.5px" width="17" height="19" viewBox="0 0 17 19"><path d="M1.2 15.5V2.5a1.3 1.3 0 0 1 1.3-1.3h9.5" stroke="#2e2e2e" stroke-width="1.5" fill="none"/><rect x="4.5" y="5" width="11" height="13" rx="1" stroke="#2e2e2e" stroke-width="1.5" fill="none"/></svg><div class="t" style="left:952.6px;top:350.38px;font-size:15.5px;font-weight:400;color:#4b4b4b;transform:scaleX(0.9534);transform-origin:0 0;">Copy</div><div class="t" style="left:1191.24px;top:350.80px;font-size:15px;font-weight:400;color:#8c8c8c;transform:scaleX(0.9853);transform-origin:51.26px 0;">Ctrl + C</div><svg style="left:923.0px;top:383.5px" width="16" height="19" viewBox="0 0 16 19"><rect x="1" y="3" width="14" height="15" rx="1.5" stroke="#8a8a8a" stroke-width="1.5" fill="none"/><rect x="4.5" y="1" width="7" height="3.5" rx="1" stroke="#8a8a8a" stroke-width="1.5" fill="none" fill="#fff"/></svg><div class="t" style="left:952.6px;top:385.38px;font-size:15.5px;font-weight:400;color:#8b8b8b;transform:scaleX(0.9486);transform-origin:0 0;">Paste</div><div class="t" style="left:1192.07px;top:385.80px;font-size:15px;font-weight:400;color:#8c8c8c;transform:scaleX(1.0014);transform-origin:50.43px 0;">Ctrl + V</div><div class="t" style="left:952.6px;top:420.88px;font-size:15.5px;font-weight:400;color:#8b8b8b;transform:scaleX(0.9582);transform-origin:0 0;">Paste Special...</div><div class="t" style="left:1144.96px;top:421.30px;font-size:15px;font-weight:400;color:#8c8c8c;transform:scaleX(1.0232);transform-origin:97.54px 0;">Ctrl + Shift + V</div><div class="t" style="left:952.6px;top:456.08px;font-size:15.5px;font-weight:400;color:#4b4b4b;transform:scaleX(0.9798);transform-origin:0 0;">Clear Contents</div><div class="a" style="left:920px;top:493.5px;width:324px;height:3px;background:#dedede"></div><svg style="left:921.5px;top:515.5px" width="19" height="19" viewBox="0 0 19 19"><path d="M3 5.5A8 8 0 1 1 2 11" stroke="#2e2e2e" stroke-width="1.5" fill="none"/><path d="M1.5 1.5v4.5H6" stroke="#2e2e2e" stroke-width="1.5" fill="none"/><path d="M9.5 5.5v4.5l3 2.5" stroke="#2e2e2e" stroke-width="1.5" fill="none"/></svg><div class="t" style="left:952.6px;top:517.48px;font-size:15.5px;font-weight:400;color:#4b4b4b;transform:scaleX(0.9936);transform-origin:0 0;">View Cell History...</div><div class="a" style="left:920px;top:554.0px;width:324px;height:3px;background:#dedede"></div><div class="t" style="left:952.6px;top:579.28px;font-size:15.5px;font-weight:400;color:#4b4b4b;transform:scaleX(0.9665);transform-origin:0 0;">Insert Row</div><div class="t" style="left:1174.97px;top:579.70px;font-size:15px;font-weight:400;color:#8c8c8c;transform:scaleX(0.9995);transform-origin:67.53px 0;">Insert Key</div><svg style="left:922.5px;top:612.5px" width="17" height="19" viewBox="0 0 17 19"><path d="M1 4.2h15M5.8 4.2V1.6h5.4v2.6M2.6 4.5l1.1 13.2h9.6l1.1-13.2" stroke="#454545" stroke-width="1.4" fill="none" stroke-linejoin="round"/><path d="M6.4 7.5v7.5M8.5 7.5v7.5M10.6 7.5v7.5" stroke="#454545" stroke-width="1.1"/></svg><div class="t" style="left:952.6px;top:614.28px;font-size:15.5px;font-weight:400;color:#4b4b4b;transform:scaleX(0.9548);transform-origin:0 0;">Delete Row</div><svg style="left:921.0px;top:648.0px" width="20" height="18" viewBox="0 0 20 18"><path d="M1 1h18v12.5H7L3.5 17v-3.5H1z" stroke="#2e2e2e" stroke-width="1.5" fill="none" stroke-linejoin="round"/></svg><div class="t" style="left:952.6px;top:649.28px;font-size:15.5px;font-weight:400;color:#4b4b4b;transform:scaleX(0.9639);transform-origin:0 0;">Add a Row Comment</div><div class="t" style="left:952.6px;top:684.28px;font-size:15.5px;font-weight:400;color:#4b4b4b;transform:scaleX(0.9765);transform-origin:0 0;">Row Actions...</div><div class="a" style="left:920px;top:721.5px;width:324px;height:3px;background:#dedede"></div><svg style="left:921.5px;top:745.0px" width="19" height="18" viewBox="0 0 19 18"><rect x="1" y="1" width="17" height="16" stroke="#2e2e2e" stroke-width="1.5" fill="none"/><path d="M1 15l5-6.5 4 4.5 3-3 5 5" stroke="#2e2e2e" stroke-width="1.5" fill="none"/><circle cx="5.5" cy="5" r="1" fill="#454545"/></svg><div class="t" style="left:952.6px;top:746.48px;font-size:15.5px;font-weight:400;color:#4b4b4b;transform:scaleX(0.9808);transform-origin:0 0;">Insert Image</div><svg style="left:1230.5px;top:749.0px" width="7" height="10" viewBox="0 0 7 10"><path d="M0 0l7 5-7 5z" fill="#111"/></svg><svg style="left:922.0px;top:778.0px" width="22" height="22" viewBox="0 0 22 22"><path d="M8.5 6.5c-.6-1-2-.9-2.4.4L4.2 18c-.3 1.4-1.7 2-2.6 1.2" stroke="#454545" stroke-width="1.5" fill="none" stroke-linecap="round"/><path d="M3.5 10.5h5" stroke="#454545" stroke-width="1.4"/><path d="M9 14l4 5M13 14l-4 5" stroke="#454545" stroke-width="1.4"/><path d="M16.5 1c.3 1.8 1 2.6 2.8 2.9-1.8.3-2.5 1.1-2.8 2.9-.3-1.8-1-2.6-2.8-2.9 1.8-.3 2.5-1.1 2.8-2.9z" fill="#454545"/></svg><div class="t" style="left:952.6px;top:781.48px;font-size:15.5px;font-weight:400;color:#4b4b4b;transform:scaleX(0.9783);transform-origin:0 0;">Generate formula</div><svg style="left:921.5px;top:814.0px" width="21" height="20" viewBox="0 0 21 20"><path d="M1 7h12M1 11h18M1 15h18M1 19h18" stroke="#454545" stroke-width="1.5"/><path d="M17 0.5c.3 1.8 1 2.6 2.8 2.9-1.8.3-2.5 1.1-2.8 2.9-.3-1.8-1-2.6-2.8-2.9 1.8-.3 2.5-1.1 2.8-2.9z" fill="#454545"/></svg><div class="t" style="left:952.6px;top:816.48px;font-size:15.5px;font-weight:400;color:#4b4b4b;transform:scaleX(0.9910);transform-origin:0 0;">Generate content</div><svg style="left:921px;top:850px" width="20" height="20" viewBox="0 0 24 24"><path d="M10 13a5 5 0 0 0 7.54.54l3-3a5 5 0 0 0-7.07-7.07l-1.72 1.71M14 11a5 5 0 0 0-7.54-.54l-3 3a5 5 0 0 0 7.07 7.07l1.71-1.71" stroke="#2a2a2a" stroke-width="1.8" fill="none" stroke-linecap="round"/></svg><div class="t" style="left:952.6px;top:851.38px;font-size:15.5px;font-weight:400;color:#4b4b4b;transform:scaleX(0.9768);transform-origin:0 0;">Link from Cell in Other Sheet...</div><div class="t" style="left:952.6px;top:887.08px;font-size:15.5px;font-weight:400;color:#4b4b4b;transform:scaleX(0.9659);transform-origin:0 0;">Manage References...</div><div class="t" style="left:952.6px;top:922.08px;font-size:15.5px;font-weight:400;color:#4b4b4b;transform:scaleX(0.9881);transform-origin:0 0;">Hyperlink...</div><div class="t" style="left:1192.07px;top:922.50px;font-size:15px;font-weight:400;color:#8c8c8c;transform:scaleX(0.9935);transform-origin:50.43px 0;">Ctrl + K</div><div class="a" style="left:920px;top:959.0px;width:324px;height:3px;background:#dedede"></div><svg style="left:922.5px;top:981.5px" width="17" height="19" viewBox="0 0 17 19"><path d="M8.5 2c-.6-1-2-.9-2.4.4L4 15.5c-.3 1.4-1.7 2-2.6 1.2" stroke="#222" stroke-width="1.6" fill="none" stroke-linecap="round"/><path d="M3 6.8h5" stroke="#222" stroke-width="1.5"/><path d="M9 11l5 6M14 11l-5 6" stroke="#222" stroke-width="1.6"/></svg><div class="t" style="left:952.6px;top:983.10px;font-size:15px;font-weight:700;color:#222;transform:scaleX(0.9398);transform-origin:0 0;">Convert to Column Formula</div><svg style="left:1223.5px;top:981.5px" width="19" height="19" viewBox="0 0 19 19"><circle cx="9.5" cy="9.5" r="8.5" stroke="#222" stroke-width="1.5" fill="none"/><circle cx="9.5" cy="5.8" r="1.1" fill="#222"/><path d="M9.5 8.5v5.5" stroke="#222" stroke-width="1.7"/></svg><div class="a" style="left:0;top:1028px;width:1920px;height:5px;background:#3b3b3b"></div><div class="a" style="left:0;top:1033px;width:1920px;height:47px;background:#1c1c1c"></div><svg style="left:19px;top:1044px" width="24" height="24" viewBox="0 0 24 24"><defs><linearGradient id="sun" x1="0" y1="0" x2="1" y2="1"><stop offset="0" stop-color="#f7c02a"/><stop offset="1" stop-color="#f2761a"/></linearGradient></defs><circle cx="10.5" cy="11" r="10" fill="url(#sun)"/><ellipse cx="13" cy="15.5" rx="7" ry="3.3" fill="#b9d4f2"/><ellipse cx="11.5" cy="13.5" rx="4" ry="2.8" fill="#d3e4f7"/></svg><div class="a" style="left:30.2px;top:1037.7px;width:15.4px;height:15.4px;border-radius:50%;background:#f59aa4"></div><div class="t" style="left:34.6px;top:1040.69px;font-size:11px;font-weight:400;color:#111;transform:scaleX(0.9807);transform-origin:0 0;">1</div><div class="t" style="left:50.7px;top:1042.11px;font-size:11.8px;font-weight:400;color:#fff;transform:scaleX(0.9380);transform-origin:0 0;">38°F</div><div class="t" style="left:50.7px;top:1057.91px;font-size:11.8px;font-weight:400;color:#d0d0d0;transform:scaleX(1.0311);transform-origin:0 0;">Mostly sunny</div><svg style="left:661px;top:1044px" width="23" height="23" viewBox="0 0 23 23"><rect x="0" y="0" width="10.8" height="10.8" fill="#4cc2ff"/><rect x="12.2" y="0" width="10.8" height="10.8" fill="#4cc2ff"/><rect x="0" y="12.2" width="10.8" height="10.8" fill="#2aa5f0"/><rect x="12.2" y="12.2" width="10.8" height="10.8" fill="#2aa5f0"/></svg><div class="a" style="left:697px;top:1040px;width:220px;height:32px;background:#2d2d2d;border-radius:16px;border:1px solid #3a3a3a"></div><svg style="left:708px;top:1048px" width="16" height="16" viewBox="0 0 16 16"><circle cx="6.5" cy="6.5" r="5.5" stroke="#e6e6e6" stroke-width="1.4" fill="none"/><path d="M10.5 10.5l4.5 4.5" stroke="#e6e6e6" stroke-width="1.4"/></svg><div class="t" style="left:734.3px;top:1049.40px;font-size:14px;font-weight:400;color:#d0d0d0;transform:scaleX(0.9197);transform-origin:0 0;">Search</div><svg style="left:875px;top:1046px" width="27" height="20" viewBox="0 0 27 20"><rect x="1" y="1" width="25" height="17" fill="#eee"/><rect x="1" y="1.0" width="25" height="1.3" fill="#c8334a"/><rect x="1" y="3.6" width="25" height="1.3" fill="#c8334a"/><rect x="1" y="6.2" width="25" height="1.3" fill="#c8334a"/><rect x="1" y="8.8" width="25" height="1.3" fill="#c8334a"/><rect x="1" y="11.4" width="25" height="1.3" fill="#c8334a"/><rect x="1" y="14.0" width="25" height="1.3" fill="#c8334a"/><rect x="1" y="16.6" width="25" height="1.3" fill="#c8334a"/><rect x="1" y="1" width="11" height="9" fill="#3b4d94"/></svg><svg style="left:929px;top:1044px" width="25" height="23" viewBox="0 0 25 23"><rect x="7" y="1" width="17" height="15" rx="1.5" fill="#e8e8e8"/><rect x="1" y="7" width="17" height="15" rx="1.5" fill="#8c8c8c"/></svg><svg style="left:972px;top:1043px" width="26" height="26" viewBox="0 0 26 26"><circle cx="18" cy="7" r="4" fill="#7b83eb"/><rect x="10" y="11" width="15" height="12" rx="5" fill="#7b83eb"/><circle cx="11" cy="6" r="4.5" fill="#5059c9"/><rect x="4" y="11" width="15" height="13" rx="5" fill="#5059c9"/><rect x="1" y="9" width="12" height="12" rx="2" fill="#4b53bc"/><text x="7" y="18.5" font-size="9" font-weight="700" fill="#fff" text-anchor="middle" font-family="Liberation Sans">T</text></svg><div class="a" style="left:985px;top:1037px;width:16px;height:16px;border-radius:50%;background:#c42b1c"></div><div class="t" style="left:985px;width:16px;text-align:center;top:1040px;font-size:11px;color:#fff">1</div><div class="a" style="left:981px;top:1073px;width:6px;height:3px;border-radius:2px;background:#9a9a9a"></div><div class="a" style="left:1009px;top:1037px;width:40px;height:40px;background:#2c2c2c;border-radius:5px;border:1px solid #343434"></div><svg style="left:1016px;top:1043px" width="26" height="26" viewBox="0 0 26 26"><defs><linearGradient id="eg" x1="0" y1="0" x2="1" y2="1"><stop offset="0" stop-color="#35c1f1"/><stop offset="0.5" stop-color="#1b9de2"/><stop offset="1" stop-color="#0c59a4"/></linearGradient></defs><circle cx="13" cy="13" r="12" fill="url(#eg)"/><path d="M25 12c0-5-5-9-11-9C8 3 3 7 2 13c2-4 6-6 10-6 5 0 7 3 7 5 0 1.5-1 2-2.5 2H9c0 3 3 6 7 6 4 0 9-3 9-8z" fill="#4fd66f"/><ellipse cx="13" cy="15" rx="5" ry="4" fill="#1a6fbd"/></svg><div class="a" style="left:1021px;top:1073px;width:16px;height:3px;border-radius:2px;background:#5fb2f2"></div><svg style="left:1059px;top:1043px" width="27" height="26" viewBox="0 0 27 26"><rect x="9" y="3" width="17" height="20" rx="2" fill="#28a8ea"/><path d="M9 12l17 0v9a2 2 0 0 1-2 2H11a2 2 0 0 1-2-2z" fill="#0a74c9"/><rect x="1" y="6" width="14" height="14" rx="2" fill="#0f64b8"/><text x="8" y="17" font-size="10" font-weight="700" fill="#fff" text-anchor="middle" font-family="Liberation Sans">O</text></svg><div class="a" style="left:1070px;top:1073px;width:6px;height:3px;border-radius:2px;background:#9a9a9a"></div><svg style="left:1104px;top:1044px" width="25" height="22" viewBox="0 0 25 22"><path d="M0 2a2 2 0 0 1 2-2h7l2 2.5h12a2 2 0 0 1 2 2V20a2 2 0 0 1-2 2H2a2 2 0 0 1-2-2z" fill="#f3b21b"/><rect x="0" y="6" width="25" height="16" rx="2" fill="#ffd150"/><rect x="8" y="14" width="9" height="3" rx="1" fill="#1c8ae0"/></svg><svg style="left:1148px;top:1043px" width="26" height="26" viewBox="0 0 26 26"><circle cx="13" cy="13" r="13" fill="#5865f2"/><path d="M7.5 9c1.5-1 3-1.3 3.5-1.3l.3.6c1.1-.2 2.3-.2 3.4 0l.3-.6c.5 0 2 .3 3.5 1.3 1.2 2 1.8 4.2 1.7 6.7-1.3 1-2.5 1.5-3.5 1.7l-.8-1.2c.5-.2 1-.4 1.4-.7-.1-.1-.2-.1-.3-.2-2.2 1-5.4 1-7.6 0l-.3.2c.4.3.9.5 1.4.7l-.8 1.2c-1-.2-2.2-.7-3.5-1.7-.1-2.5.5-4.7 1.3-6.7z" fill="#fff"/><circle cx="10.5" cy="13" r="1.2" fill="#5865f2"/><circle cx="15.5" cy="13" r="1.2" fill="#5865f2"/></svg><svg style="left:1192px;top:1043px" width="26" height="26" viewBox="0 0 26 26"><rect x="1" y="1" width="24" height="24" rx="4" fill="#3a1670"/><text x="13" y="19" font-size="17" font-weight="700" fill="#fff" text-anchor="middle" font-family="Liberation Sans">G</text></svg><div class="a" style="left:1202px;top:1073px;width:6px;height:3px;border-radius:2px;background:#9a9a9a"></div><svg style="left:1237px;top:1044px" width="26" height="24" viewBox="0 0 26 24"><rect x="8" y="1" width="17" height="22" rx="2" fill="#0f7b6c"/><circle cx="21" cy="5" r="2.5" fill="#37c1b0"/><rect x="12" y="10" width="10" height="10" fill="#1ba595"/><rect x="1" y="5" width="14" height="14" rx="2" fill="#0a6558"/><text x="8" y="16" font-size="10" font-weight="700" fill="#fff" text-anchor="middle" font-family="Liberation Sans">F</text></svg><div class="t" style="left:1833.11px;top:1041.81px;font-size:11.8px;font-weight:400;color:#fff;transform:scaleX(1.0047);transform-origin:43.29px 0;">7:35 AM</div><div class="t" style="left:1823.90px;top:1057.51px;font-size:11.8px;font-weight:400;color:#fff;transform:scaleX(1.0401);transform-origin:52.50px 0;">2/16/2026</div><svg style="left:1884px;top:1046px" width="18" height="19" viewBox="0 0 18 19"><path d="M2 13V9a6 6 0 0 1 9-5.2" stroke="#fff" stroke-width="1.6" fill="#fff"/><path d="M2 9a6 6 0 0 1 12 0v4l2 2H0z" fill="#fff"/><path d="M6.5 17h4" stroke="#fff" stroke-width="2"/><text x="12" y="7" font-size="7" font-weight="700" fill="#fff" font-family="Liberation Sans">z</text><text x="5.5" y="12" font-size="7" font-weight="700" fill="#1c1c1c" font-family="Liberation Sans">z</text></svg></body></html>
